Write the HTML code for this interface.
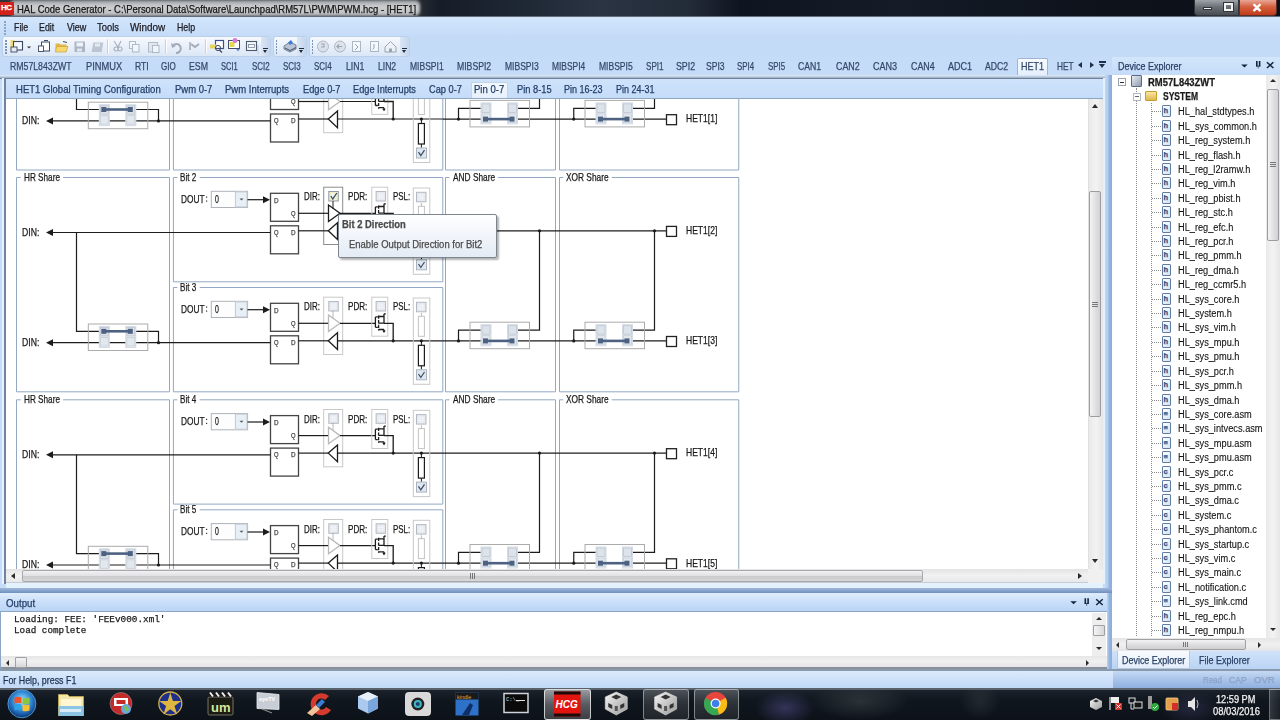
<!DOCTYPE html>
<html><head><meta charset="utf-8"><title>HAL Code Generator</title>
<style>
*{margin:0;padding:0;box-sizing:border-box}
html,body{width:1280px;height:720px;overflow:hidden;background:#c4dbf8;font-family:'Liberation Sans',sans-serif;}
.a{position:absolute;}
.t{position:absolute;white-space:pre;line-height:1;transform-origin:0 0;-webkit-text-stroke:0.25px currentColor;}
</style></head><body>

<div class="a" style="left:0;top:0;width:1280px;height:17px;background:linear-gradient(90deg,#2e333a 0px,#262b33 420px,#161d28 440px,#1e2734 520px,#2a3443 600px,#222b38 690px,#0f1520 740px,#151b27 900px,#0d121b 1100px,#0b101a 1280px);"></div>
<div class="a" style="left:10px;top:0px;width:410px;height:16px;background:linear-gradient(180deg,#9a9da1,#cdcfd1 40%,#b9bbbe);border-radius:5px;filter:blur(1.5px)"></div>
<div class="a" style="left:0;top:2px;width:14px;height:13px;background:#d4201a;"></div>
<div class="t" style="left:1px;top:4px;font-size:8px;font-weight:bold;color:#fff;letter-spacing:-0.5px">HC</div>
<div class="t" style="left:17.00px;top:4px;font-size:10.5px;color:#151515;font-weight:normal;font-family:'Liberation Sans';font-style:normal;transform:scaleX(0.902);">HAL Code Generator - C:\Personal Data\Software\Launchpad\RM57L\PWM\PWM.hcg - [HET1]</div>
<div class="a" style="left:1194px;top:0;width:45px;height:16px;background:linear-gradient(180deg,#a0a4a9,#6c7178 45%,#474c53);border:1px solid #30343a;border-top:none;border-radius:0 0 0 4px"></div>
<div class="a" style="left:1203px;top:7px;width:9px;height:3px;background:#f4f4f4;border:1px solid #333"></div>
<div class="a" style="left:1224px;top:3px;width:9px;height:8px;border:2px solid #f4f4f4;box-shadow:0 0 0 1px #333"></div>
<div class="a" style="left:1239px;top:0;width:38px;height:16px;background:linear-gradient(180deg,#e9a798,#d4603f 45%,#c13b1a);border:1px solid #5a3028;border-top:none;border-radius:0 0 4px 0"></div>
<div class="t" style="left:1252px;top:2px;font-size:12px;font-weight:bold;color:#fff;">&#x2715;</div>
<div class="a" style="left:0;top:16px;width:1280px;height:1px;background:#626b77"></div>
<div class="a" style="left:0;top:17px;width:1280px;height:20px;background:linear-gradient(180deg,#d2e5fb,#c4dbf8);"></div>
<div class="a" style="left:4px;top:21px;width:2px;height:2px;background:#8ea6c4"></div>
<div class="a" style="left:4px;top:24px;width:2px;height:2px;background:#8ea6c4"></div>
<div class="a" style="left:4px;top:27px;width:2px;height:2px;background:#8ea6c4"></div>
<div class="a" style="left:4px;top:30px;width:2px;height:2px;background:#8ea6c4"></div>
<div class="a" style="left:4px;top:33px;width:2px;height:2px;background:#8ea6c4"></div>
<div class="t" style="left:13.50px;top:23px;font-size:10.3px;color:#1c1c24;font-weight:normal;font-family:'Liberation Sans';font-style:normal;transform:scaleX(0.859);">File</div>
<div class="t" style="left:39.40px;top:23px;font-size:10.3px;color:#1c1c24;font-weight:normal;font-family:'Liberation Sans';font-style:normal;transform:scaleX(0.856);">Edit</div>
<div class="t" style="left:66.60px;top:23px;font-size:10.3px;color:#1c1c24;font-weight:normal;font-family:'Liberation Sans';font-style:normal;transform:scaleX(0.874);">View</div>
<div class="t" style="left:97.20px;top:23px;font-size:10.3px;color:#1c1c24;font-weight:normal;font-family:'Liberation Sans';font-style:normal;transform:scaleX(0.912);">Tools</div>
<div class="t" style="left:130.40px;top:23px;font-size:10.3px;color:#1c1c24;font-weight:normal;font-family:'Liberation Sans';font-style:normal;transform:scaleX(0.962);">Window</div>
<div class="t" style="left:176.70px;top:23px;font-size:10.3px;color:#1c1c24;font-weight:normal;font-family:'Liberation Sans';font-style:normal;transform:scaleX(0.855);">Help</div>
<div class="a" style="left:2px;top:36px;width:269px;height:21px;background:linear-gradient(180deg,#f6f9fe,#e9f0fa 50%,#dbe7f6);border:1px solid #bcd0e9;border-radius:3px"></div>
<div class="a" style="left:5px;top:40px;width:1.5px;height:1.5px;background:#7d95b5"></div>
<div class="a" style="left:5px;top:43px;width:1.5px;height:1.5px;background:#7d95b5"></div>
<div class="a" style="left:5px;top:46px;width:1.5px;height:1.5px;background:#7d95b5"></div>
<div class="a" style="left:5px;top:49px;width:1.5px;height:1.5px;background:#7d95b5"></div>
<div class="a" style="left:5px;top:52px;width:1.5px;height:1.5px;background:#7d95b5"></div>
<div class="a" style="left:261px;top:37px;width:9px;height:19px;background:linear-gradient(90deg,#dbe6f5,#c3d5ec);border-radius:0 2px 2px 0"></div>
<div class="a" style="left:263px;top:48px;width:5px;height:1px;background:#1e2a3a"></div>
<div class="a" style="left:263px;top:50px;width:0;height:0;border-left:2.5px solid transparent;border-right:2.5px solid transparent;border-top:3px solid #1e2a3a"></div>
<div class="a" style="left:272.5px;top:36px;width:34.5px;height:21px;background:linear-gradient(180deg,#f6f9fe,#e9f0fa 50%,#dbe7f6);border:1px solid #bcd0e9;border-radius:3px"></div>
<div class="a" style="left:275.5px;top:40px;width:1.5px;height:1.5px;background:#7d95b5"></div>
<div class="a" style="left:275.5px;top:43px;width:1.5px;height:1.5px;background:#7d95b5"></div>
<div class="a" style="left:275.5px;top:46px;width:1.5px;height:1.5px;background:#7d95b5"></div>
<div class="a" style="left:275.5px;top:49px;width:1.5px;height:1.5px;background:#7d95b5"></div>
<div class="a" style="left:275.5px;top:52px;width:1.5px;height:1.5px;background:#7d95b5"></div>
<div class="a" style="left:297px;top:37px;width:9px;height:19px;background:linear-gradient(90deg,#dbe6f5,#c3d5ec);border-radius:0 2px 2px 0"></div>
<div class="a" style="left:299px;top:48px;width:5px;height:1px;background:#1e2a3a"></div>
<div class="a" style="left:299px;top:50px;width:0;height:0;border-left:2.5px solid transparent;border-right:2.5px solid transparent;border-top:3px solid #1e2a3a"></div>
<div class="a" style="left:308.5px;top:36px;width:101.5px;height:21px;background:linear-gradient(180deg,#f6f9fe,#e9f0fa 50%,#dbe7f6);border:1px solid #bcd0e9;border-radius:3px"></div>
<div class="a" style="left:311.5px;top:40px;width:1.5px;height:1.5px;background:#7d95b5"></div>
<div class="a" style="left:311.5px;top:43px;width:1.5px;height:1.5px;background:#7d95b5"></div>
<div class="a" style="left:311.5px;top:46px;width:1.5px;height:1.5px;background:#7d95b5"></div>
<div class="a" style="left:311.5px;top:49px;width:1.5px;height:1.5px;background:#7d95b5"></div>
<div class="a" style="left:311.5px;top:52px;width:1.5px;height:1.5px;background:#7d95b5"></div>
<div class="a" style="left:400px;top:37px;width:9px;height:19px;background:linear-gradient(90deg,#dbe6f5,#c3d5ec);border-radius:0 2px 2px 0"></div>
<div class="a" style="left:402px;top:48px;width:5px;height:1px;background:#1e2a3a"></div>
<div class="a" style="left:402px;top:50px;width:0;height:0;border-left:2.5px solid transparent;border-right:2.5px solid transparent;border-top:3px solid #1e2a3a"></div>
<svg class="a" style="left:0;top:0" width="420" height="60" viewBox="0 0 420 60"><rect x="10.5" y="40" width="4" height="9" fill="#f2dc6a"/><rect x="13.5" y="41.5" width="9" height="8.5" fill="#f4f7fb" stroke="#3b4a63" stroke-width="1.1"/><rect x="11" y="47" width="6" height="5" fill="#e8ecf2" stroke="#3b4a63" stroke-width=".9"/><path d="M27,46.5h4l-2,2z" fill="#333"/><rect x="41.5" y="42" width="8" height="9" fill="#fff" stroke="#3b4a63" stroke-width="1"/><rect x="38.5" y="46" width="5" height="5.5" fill="#fff" stroke="#3b4a63" stroke-width=".9"/><path d="M44,40.5h4" stroke="#3b4a63" stroke-width="1"/><path d="M55.5,43.5h4l1,1h6v7h-11z" fill="#e2b84a"/><path d="M56.5,46.5h11.5l-2,5.5h-10.5z" fill="#f6d770" stroke="#c29a2e" stroke-width=".6"/><path d="M63,41.5l4,1" stroke="#3b4a63" stroke-width="1"/><rect x="74.5" y="41.5" width="10.5" height="10.5" fill="#9ba6b8" opacity=".8"/><rect x="76.5" y="42.5" width="6.5" height="4" fill="#eef2f7"/><rect x="77" y="48.5" width="5" height="3" fill="#dfe5ec"/><rect x="92.5" y="42.5" width="10" height="9.5" fill="#aab3c2" opacity=".7" transform="skewX(-10)" transform-origin="97 47"/><rect x="95" y="43.5" width="5" height="3" fill="#eef2f7" opacity=".8"/><g opacity=".45"><path d="M114,41l4,6l3,-6M116,47a2,2 0 1 0 .1,0M120,47a2,2 0 1 0 .1,0" stroke="#5d6878" stroke-width="1.2" fill="none"/><rect x="129.5" y="41.5" width="6" height="7" fill="#fff" stroke="#6d7888"/><rect x="132.5" y="44.5" width="6.5" height="7.5" fill="#fff" stroke="#6d7888"/><rect x="148.5" y="42.5" width="9" height="9.5" fill="#d8dde4" stroke="#6d7888"/><rect x="152.5" y="45.5" width="6.5" height="7" fill="#fff" stroke="#6d7888"/></g><g opacity=".45"><path d="M173,45.5a4.5,4.5 0 1 1 3,7.5" stroke="#4d5868" stroke-width="2" fill="none"/><path d="M171,43l1,5l4,-2z" fill="#4d5868"/><path d="M191,44l4,3l4,-3" stroke="#4d5868" stroke-width="2" fill="none"/><path d="M190,42v8" stroke="#4d5868" stroke-width="1.5"/></g><rect x="215.5" y="40.5" width="8" height="8" fill="#fff" stroke="#3d4f8a" stroke-width="1.2"/><path d="M210,44.5h6v4h-6z" fill="#e8d45a"/><circle cx="218" cy="48" r="2.6" fill="none" stroke="#3b4a63" stroke-width="1"/><path d="M219.5,50l2.5,2.5" stroke="#3b4a63" stroke-width="1.3"/><rect x="228.5" y="40.5" width="11" height="8" fill="#fff" stroke="#4a4d6a" stroke-width="1"/><rect x="229.5" y="42" width="5" height="5" fill="#e0dc50"/><path d="M235,43a2.5,2.5 0 1 1 .1,0z" fill="#d77ad6"/><path d="M236,49l2,2.5l2,-2.5z" fill="#6a8cc8"/><rect x="246.5" y="41.5" width="10" height="9" fill="#f6f8fb" stroke="#4d5a70" stroke-width="1.1"/><rect x="248.5" y="44.5" width="6" height="3" fill="none" stroke="#7a8598" stroke-width=".8"/><path d="M284,46l6,-4l6,3v4l-6,3l-6,-3z" fill="#b9c4d4" stroke="#5a6a80" stroke-width=".8"/><path d="M288,42.5l3,-2.5l2,3l-3,2z" fill="#3d7ad6"/><path d="M285,48l5,2.5l6,-3" stroke="#44526a" stroke-width="1" fill="none"/><g opacity=".55"><circle cx="323" cy="46.5" r="5.5" fill="#d3d8df" stroke="#7d8796" stroke-width="1"/><path d="M321,44h3v3h-3" stroke="#5d6878" stroke-width="1.1" fill="none"/><circle cx="340" cy="46.5" r="5.5" fill="#d3d8df" stroke="#7d8796" stroke-width="1"/><path d="M337,46.5h5M339,44.5l-2,2l2,2" stroke="#5d6878" stroke-width="1.1" fill="none"/><rect x="352.5" y="41.5" width="8" height="10" fill="#fff" stroke="#7d8796"/><path d="M355,44l3,3l-3,3" stroke="#5d6878" fill="none"/><rect x="370.5" y="41.5" width="8" height="10" fill="#fff" stroke="#7d8796"/><path d="M374,44v4l-1.5,1.5" stroke="#5d6878" fill="none"/><path d="M385,47l5.5,-5.5l5.5,5.5v5h-11z" fill="#f2f4f7" stroke="#5d6878" stroke-width="1"/><rect x="389" y="48.5" width="3" height="3.5" fill="#5d6878"/></g><path d="M258,45v9" stroke="#b7c9df" stroke-width="1"/><path d="M107.5,39.5v14" stroke="#c2d1e5" stroke-width="1"/><path d="M108.5,39.5v14" stroke="#fff" stroke-width="1"/><path d="M165.5,39.5v14" stroke="#c2d1e5" stroke-width="1"/><path d="M166.5,39.5v14" stroke="#fff" stroke-width="1"/><path d="M205.5,39.5v14" stroke="#c2d1e5" stroke-width="1"/><path d="M206.5,39.5v14" stroke="#fff" stroke-width="1"/></svg>
<div class="a" style="left:0;top:57px;width:1112px;height:18px;background:#c5dcf9;"></div>
<div class="a" style="left:1017px;top:58px;width:31px;height:18px;background:linear-gradient(180deg,#f7fbff,#e3eefb);border:1px solid #9fb5d2;border-bottom:none;border-radius:2px 2px 0 0"></div>
<div class="t" style="left:10.00px;top:62px;font-size:10.2px;color:#34496a;font-weight:normal;font-family:'Liberation Sans';font-style:normal;transform:scaleX(0.856);">RM57L843ZWT</div>
<div class="t" style="left:85.50px;top:62px;font-size:10.2px;color:#34496a;font-weight:normal;font-family:'Liberation Sans';font-style:normal;transform:scaleX(0.912);">PINMUX</div>
<div class="t" style="left:134.50px;top:62px;font-size:10.2px;color:#34496a;font-weight:normal;font-family:'Liberation Sans';font-style:normal;transform:scaleX(0.844);">RTI</div>
<div class="t" style="left:161.00px;top:62px;font-size:10.2px;color:#34496a;font-weight:normal;font-family:'Liberation Sans';font-style:normal;transform:scaleX(0.789);">GIO</div>
<div class="t" style="left:189.00px;top:62px;font-size:10.2px;color:#34496a;font-weight:normal;font-family:'Liberation Sans';font-style:normal;transform:scaleX(0.864);">ESM</div>
<div class="t" style="left:221.00px;top:62px;font-size:10.2px;color:#34496a;font-weight:normal;font-family:'Liberation Sans';font-style:normal;transform:scaleX(0.739);">SCI1</div>
<div class="t" style="left:252.00px;top:62px;font-size:10.2px;color:#34496a;font-weight:normal;font-family:'Liberation Sans';font-style:normal;transform:scaleX(0.783);">SCI2</div>
<div class="t" style="left:283.00px;top:62px;font-size:10.2px;color:#34496a;font-weight:normal;font-family:'Liberation Sans';font-style:normal;transform:scaleX(0.783);">SCI3</div>
<div class="t" style="left:314.00px;top:62px;font-size:10.2px;color:#34496a;font-weight:normal;font-family:'Liberation Sans';font-style:normal;transform:scaleX(0.783);">SCI4</div>
<div class="t" style="left:346.00px;top:62px;font-size:10.2px;color:#34496a;font-weight:normal;font-family:'Liberation Sans';font-style:normal;transform:scaleX(0.857);">LIN1</div>
<div class="t" style="left:377.50px;top:62px;font-size:10.2px;color:#34496a;font-weight:normal;font-family:'Liberation Sans';font-style:normal;transform:scaleX(0.841);">LIN2</div>
<div class="t" style="left:409.50px;top:62px;font-size:10.2px;color:#34496a;font-weight:normal;font-family:'Liberation Sans';font-style:normal;transform:scaleX(0.838);">MIBSPI1</div>
<div class="t" style="left:457.00px;top:62px;font-size:10.2px;color:#34496a;font-weight:normal;font-family:'Liberation Sans';font-style:normal;transform:scaleX(0.850);">MIBSPI2</div>
<div class="t" style="left:504.50px;top:62px;font-size:10.2px;color:#34496a;font-weight:normal;font-family:'Liberation Sans';font-style:normal;transform:scaleX(0.838);">MIBSPI3</div>
<div class="t" style="left:552.00px;top:62px;font-size:10.2px;color:#34496a;font-weight:normal;font-family:'Liberation Sans';font-style:normal;transform:scaleX(0.825);">MIBSPI4</div>
<div class="t" style="left:599.00px;top:62px;font-size:10.2px;color:#34496a;font-weight:normal;font-family:'Liberation Sans';font-style:normal;transform:scaleX(0.838);">MIBSPI5</div>
<div class="t" style="left:645.50px;top:62px;font-size:10.2px;color:#34496a;font-weight:normal;font-family:'Liberation Sans';font-style:normal;transform:scaleX(0.795);">SPI1</div>
<div class="t" style="left:676.00px;top:62px;font-size:10.2px;color:#34496a;font-weight:normal;font-family:'Liberation Sans';font-style:normal;transform:scaleX(0.864);">SPI2</div>
<div class="t" style="left:706.00px;top:62px;font-size:10.2px;color:#34496a;font-weight:normal;font-family:'Liberation Sans';font-style:normal;transform:scaleX(0.841);">SPI3</div>
<div class="t" style="left:737.00px;top:62px;font-size:10.2px;color:#34496a;font-weight:normal;font-family:'Liberation Sans';font-style:normal;transform:scaleX(0.773);">SPI4</div>
<div class="t" style="left:767.50px;top:62px;font-size:10.2px;color:#34496a;font-weight:normal;font-family:'Liberation Sans';font-style:normal;transform:scaleX(0.773);">SPI5</div>
<div class="t" style="left:798.00px;top:62px;font-size:10.2px;color:#34496a;font-weight:normal;font-family:'Liberation Sans';font-style:normal;transform:scaleX(0.852);">CAN1</div>
<div class="t" style="left:836.00px;top:62px;font-size:10.2px;color:#34496a;font-weight:normal;font-family:'Liberation Sans';font-style:normal;transform:scaleX(0.870);">CAN2</div>
<div class="t" style="left:873.00px;top:62px;font-size:10.2px;color:#34496a;font-weight:normal;font-family:'Liberation Sans';font-style:normal;transform:scaleX(0.889);">CAN3</div>
<div class="t" style="left:911.00px;top:62px;font-size:10.2px;color:#34496a;font-weight:normal;font-family:'Liberation Sans';font-style:normal;transform:scaleX(0.870);">CAN4</div>
<div class="t" style="left:948.00px;top:62px;font-size:10.2px;color:#34496a;font-weight:normal;font-family:'Liberation Sans';font-style:normal;transform:scaleX(0.889);">ADC1</div>
<div class="t" style="left:985.00px;top:62px;font-size:10.2px;color:#34496a;font-weight:normal;font-family:'Liberation Sans';font-style:normal;transform:scaleX(0.852);">ADC2</div>
<div class="t" style="left:1021.00px;top:62px;font-size:10.2px;color:#34496a;font-weight:normal;font-family:'Liberation Sans';font-style:normal;transform:scaleX(0.885);">HET1</div>
<div class="t" style="left:1057.00px;top:62px;font-size:10.2px;color:#34496a;font-weight:normal;font-family:'Liberation Sans';font-style:normal;transform:scaleX(0.810);">HET</div>
<div class="a" style="left:1078px;top:62px;width:0;height:0;border-top:3.5px solid transparent;border-bottom:3.5px solid transparent;border-right:4px solid #1e2f47"></div>
<div class="a" style="left:1090px;top:62px;width:0;height:0;border-top:3.5px solid transparent;border-bottom:3.5px solid transparent;border-left:4px solid #1e2f47"></div>
<div class="a" style="left:1099px;top:61px;width:7px;height:1.5px;background:#1e2f47"></div>
<div class="a" style="left:1099px;top:64px;width:0;height:0;border-left:3.5px solid transparent;border-right:3.5px solid transparent;border-top:4px solid #1e2f47"></div>
<div class="a" style="left:0;top:75px;width:1112px;height:3px;background:linear-gradient(180deg,#e6f0fb,#9aaec8)"></div>
<div class="a" style="left:0;top:78px;width:1112px;height:515px;background:#c6ddf9"></div>
<div class="a" style="left:0;top:78px;width:1112px;height:1px;background:#6e7f96"></div>
<div class="a" style="left:2px;top:78px;width:2px;height:506px;background:#eaf3fd"></div>
<div class="a" style="left:4px;top:78px;width:2px;height:506px;background:#6f84a0"></div>
<div class="a" style="left:1103px;top:78px;width:2px;height:506px;background:#e3f1fc"></div>
<div class="a" style="left:1105px;top:75px;width:7px;height:596px;background:linear-gradient(90deg,#c4d8f2 0,#b3cced 40%,#94b4e0 60%,#8aaddb)"></div>
<div class="a" style="left:6px;top:79px;width:1097px;height:20px;background:linear-gradient(180deg,#cfe3fb,#c4dbf8)"></div>
<div class="a" style="left:471px;top:81.5px;width:37px;height:17.5px;background:linear-gradient(180deg,#f3f8fe,#e6f0fc);border:1px solid #c3d3e8;border-bottom:none;border-radius:2px 2px 0 0"></div>
<div class="t" style="left:15.90px;top:85px;font-size:10.2px;color:#24406a;font-weight:normal;font-family:'Liberation Sans';font-style:normal;transform:scaleX(0.936);">HET1 Global Timing Configuration</div>
<div class="t" style="left:174.50px;top:85px;font-size:10.2px;color:#24406a;font-weight:normal;font-family:'Liberation Sans';font-style:normal;transform:scaleX(0.930);">Pwm 0-7</div>
<div class="t" style="left:225.00px;top:85px;font-size:10.2px;color:#24406a;font-weight:normal;font-family:'Liberation Sans';font-style:normal;transform:scaleX(0.935);">Pwm Interrupts</div>
<div class="t" style="left:302.80px;top:85px;font-size:10.2px;color:#24406a;font-weight:normal;font-family:'Liberation Sans';font-style:normal;transform:scaleX(0.907);">Edge 0-7</div>
<div class="t" style="left:352.70px;top:85px;font-size:10.2px;color:#24406a;font-weight:normal;font-family:'Liberation Sans';font-style:normal;transform:scaleX(0.904);">Edge Interrupts</div>
<div class="t" style="left:429.00px;top:85px;font-size:10.2px;color:#24406a;font-weight:normal;font-family:'Liberation Sans';font-style:normal;transform:scaleX(0.906);">Cap 0-7</div>
<div class="t" style="left:474.00px;top:85px;font-size:10.2px;color:#24406a;font-weight:normal;font-family:'Liberation Sans';font-style:normal;transform:scaleX(0.938);">Pin 0-7</div>
<div class="t" style="left:517.00px;top:85px;font-size:10.2px;color:#24406a;font-weight:normal;font-family:'Liberation Sans';font-style:normal;transform:scaleX(0.913);">Pin 8-15</div>
<div class="t" style="left:564.00px;top:85px;font-size:10.2px;color:#24406a;font-weight:normal;font-family:'Liberation Sans';font-style:normal;transform:scaleX(0.886);">Pin 16-23</div>
<div class="t" style="left:616.00px;top:85px;font-size:10.2px;color:#24406a;font-weight:normal;font-family:'Liberation Sans';font-style:normal;transform:scaleX(0.880);">Pin 24-31</div>
<div class="a" style="left:6px;top:98px;width:1097px;height:1px;background:#8fa5c2"></div>
<div class="a" style="left:6px;top:99px;width:1097px;height:470px;background:#fff;overflow:hidden">
<svg width="1097" height="470" viewBox="6 99 1097 470" style="position:absolute;left:0;top:0">
<path d="M20.75,-44.3H16.5V170.0H169.5V-44.3H63.0" fill="none" stroke="#93a8c4" stroke-width="1"/><path d="M449.5,-44.3H445.5V170.0H555.5V-44.3H498.0" fill="none" stroke="#93a8c4" stroke-width="1"/><path d="M563.25,-44.3H559.5V170.0H738.75V-44.3H611.75" fill="none" stroke="#93a8c4" stroke-width="1"/><path d="M177.3,-44.3H173.4V60.0H442.8V-44.3H199.70000000000002" fill="none" stroke="#93a8c4" stroke-width="1"/><rect x="206" y="-25.299999999999997" width="1.2" height="1.2" fill="#333"/><rect x="206" y="-21.299999999999997" width="1.2" height="1.2" fill="#333"/><rect x="211.3" y="-30.499999999999996" width="36.3" height="16.2" fill="#fdfdfe" stroke="#aeb3ba" stroke-width="1"/><rect x="235.4" y="-29.9" width="11.6" height="15" fill="#e9eff7" stroke="#c3cad3" stroke-width="1"/><path d="M239.5,-23.299999999999997h4l-2,2z" fill="#555"/><path d="M247.5,-22.099999999999998H263" fill="none" stroke="#1c1c1c" stroke-width="1.2"/><path d="M270,-22.099999999999998L263,-25.599999999999998V-18.599999999999998Z" fill="#1c1c1c"/><rect x="270.5" y="-28.499999999999996" width="28" height="28" fill="#fff" stroke="#444" stroke-width="1.3"/><rect x="270.5" y="4.0" width="28" height="28" fill="#fff" stroke="#444" stroke-width="1.3"/><rect x="323.7" y="-34.599999999999994" width="19" height="57.3" fill="none" stroke="#c9c9c9" stroke-width="1"/><rect x="328.8" y="-30.299999999999997" width="9.5" height="9.5" fill="#e6e9ee" stroke="#b3bac4" stroke-width="1"/><path d="M330.3,-26.799999999999997h6.5M330.3,-24.299999999999997h6.5M332.3,-28.799999999999997v6.5M334.8,-28.799999999999997v6.5" stroke="#f7f8fa" stroke-width=".7"/><path d="M298.5,-8.5H328" fill="none" stroke="#1c1c1c" stroke-width="1.2"/><g opacity="0.3"><path d="M328.5,-16.799999999999997L340,-8.5L328.5,-0.29999999999999716Z" fill="#fff" stroke="#1c1c1c" stroke-width="1.3"/><path d="M333,-20.799999999999997V-13.299999999999997" stroke="#1c1c1c" stroke-width="1"/></g><path d="M340,-8.5H375.4" fill="none" stroke="#1c1c1c" stroke-width="1.2"/><path d="M337.5,1.0L328.3,9.0L337.5,17.700000000000003Z" fill="#fff" stroke="#1c1c1c" stroke-width="1.3"/><path d="M298.5,9.0H328.3" fill="none" stroke="#1c1c1c" stroke-width="1.2"/><path d="M337.5,9.0H442.8" fill="none" stroke="#1c1c1c" stroke-width="1.2"/><rect x="371.8" y="-34.599999999999994" width="16" height="39" fill="none" stroke="#c9c9c9" stroke-width="1"/><rect x="376.1" y="-30.299999999999997" width="9.5" height="9.5" fill="#e6e9ee" stroke="#b3bac4" stroke-width="1"/><path d="M377.6,-26.799999999999997h6.5M377.6,-24.299999999999997h6.5M379.6,-28.799999999999997v6.5M382.1,-28.799999999999997v6.5" stroke="#f7f8fa" stroke-width=".7"/><path d="M375.4,-14.899999999999999V-4.5M377.8,-14.899999999999999H375.4M375.4,-4.5H377.8M378.5,-15.299999999999997H384M378.5,-8.699999999999996H384M378.5,-2.299999999999997H384M384,-17.999999999999996V-8.699999999999996M384,-17.999999999999996H385.8M384,-2.299999999999997V-0.29999999999999716M384,-8.5H393.2V9.0" fill="none" stroke="#1c1c1c" stroke-width="1.3"/><path d="M378.6,-16.299999999999997V-1.2999999999999972" fill="none" stroke="#1c1c1c" stroke-width="1.3" stroke-dasharray="3.2,1.4"/><path d="M382.3,-1.2999999999999972h3.4l-1.7,2.6z" fill="#1c1c1c"/><circle cx="393.2" cy="9.0" r="1.6" fill="#1c1c1c"/><rect x="413.3" y="-33.8" width="16.5" height="86.3" fill="none" stroke="#c9c9c9" stroke-width="1"/><rect x="416.5" y="-29.499999999999996" width="9.5" height="9.5" fill="#e6e9ee" stroke="#b3bac4" stroke-width="1"/><path d="M418,-25.999999999999996h6.5M418,-23.499999999999996h6.5M420,-27.999999999999996v6.5M422.5,-27.999999999999996v6.5" stroke="#f7f8fa" stroke-width=".7"/><rect x="418.4" y="-15.499999999999996" width="6" height="20" fill="#fff" stroke="#c4c4c4" stroke-width="1"/><path d="M421.4,-18.799999999999997V-15.499999999999996" stroke="#bbb" stroke-width="1"/><path d="M421.4,9.0V13.5" stroke="#1c1c1c" stroke-width="1"/><circle cx="421.4" cy="9.0" r="1.6" fill="#1c1c1c"/><rect x="418.4" y="13.5" width="6" height="20.5" fill="#fff" stroke="#1c1c1c" stroke-width="1.2"/><path d="M421.4,34.0V37.7" stroke="#1c1c1c" stroke-width="1"/><rect x="416.5" y="38.0" width="10" height="10" fill="#dfe6ef" stroke="#aab4c1" stroke-width="1"/><path d="M418.5,42.2L420.8,45.7L424.5,40.2" fill="none" stroke="#3b4a5e" stroke-width="1.2"/><path d="M177.3,65.7H173.4V170.0H442.8V65.7H199.70000000000002" fill="none" stroke="#93a8c4" stroke-width="1"/><rect x="206" y="84.7" width="1.2" height="1.2" fill="#333"/><rect x="206" y="88.7" width="1.2" height="1.2" fill="#333"/><rect x="211.3" y="79.5" width="36.3" height="16.2" fill="#fdfdfe" stroke="#aeb3ba" stroke-width="1"/><rect x="235.4" y="80.10000000000001" width="11.6" height="15" fill="#e9eff7" stroke="#c3cad3" stroke-width="1"/><path d="M239.5,86.7h4l-2,2z" fill="#555"/><path d="M247.5,87.9H263" fill="none" stroke="#1c1c1c" stroke-width="1.2"/><path d="M270,87.9L263,84.4V91.4Z" fill="#1c1c1c"/><rect x="270.5" y="81.5" width="28" height="28" fill="#fff" stroke="#444" stroke-width="1.3"/><rect x="270.5" y="114.0" width="28" height="28" fill="#fff" stroke="#444" stroke-width="1.3"/><rect x="323.7" y="75.4" width="19" height="57.3" fill="none" stroke="#c9c9c9" stroke-width="1"/><rect x="328.8" y="79.7" width="9.5" height="9.5" fill="#e6e9ee" stroke="#b3bac4" stroke-width="1"/><path d="M330.3,83.2h6.5M330.3,85.7h6.5M332.3,81.2v6.5M334.8,81.2v6.5" stroke="#f7f8fa" stroke-width=".7"/><path d="M298.5,101.5H328" fill="none" stroke="#1c1c1c" stroke-width="1.2"/><g opacity="0.3"><path d="M328.5,93.2L340,101.5L328.5,109.7Z" fill="#fff" stroke="#1c1c1c" stroke-width="1.3"/><path d="M333,89.2V96.7" stroke="#1c1c1c" stroke-width="1"/></g><path d="M340,101.5H375.4" fill="none" stroke="#1c1c1c" stroke-width="1.2"/><path d="M337.5,111.0L328.3,119.0L337.5,127.7Z" fill="#fff" stroke="#1c1c1c" stroke-width="1.3"/><path d="M298.5,119.0H328.3" fill="none" stroke="#1c1c1c" stroke-width="1.2"/><path d="M337.5,119.0H442.8" fill="none" stroke="#1c1c1c" stroke-width="1.2"/><rect x="371.8" y="75.4" width="16" height="39" fill="none" stroke="#c9c9c9" stroke-width="1"/><rect x="376.1" y="79.7" width="9.5" height="9.5" fill="#e6e9ee" stroke="#b3bac4" stroke-width="1"/><path d="M377.6,83.2h6.5M377.6,85.7h6.5M379.6,81.2v6.5M382.1,81.2v6.5" stroke="#f7f8fa" stroke-width=".7"/><path d="M375.4,95.1V105.5M377.8,95.1H375.4M375.4,105.5H377.8M378.5,94.7H384M378.5,101.30000000000001H384M378.5,107.7H384M384,92.0V101.30000000000001M384,92.0H385.8M384,107.7V109.7M384,101.5H393.2V119.0" fill="none" stroke="#1c1c1c" stroke-width="1.3"/><path d="M378.6,93.7V108.7" fill="none" stroke="#1c1c1c" stroke-width="1.3" stroke-dasharray="3.2,1.4"/><path d="M382.3,108.7h3.4l-1.7,2.6z" fill="#1c1c1c"/><circle cx="393.2" cy="119.0" r="1.6" fill="#1c1c1c"/><rect x="413.3" y="76.2" width="16.5" height="86.3" fill="none" stroke="#c9c9c9" stroke-width="1"/><rect x="416.5" y="80.5" width="9.5" height="9.5" fill="#e6e9ee" stroke="#b3bac4" stroke-width="1"/><path d="M418,84.0h6.5M418,86.5h6.5M420,82.0v6.5M422.5,82.0v6.5" stroke="#f7f8fa" stroke-width=".7"/><rect x="418.4" y="94.5" width="6" height="20" fill="#fff" stroke="#c4c4c4" stroke-width="1"/><path d="M421.4,91.2V94.5" stroke="#bbb" stroke-width="1"/><path d="M421.4,119.0V123.5" stroke="#1c1c1c" stroke-width="1"/><circle cx="421.4" cy="119.0" r="1.6" fill="#1c1c1c"/><rect x="418.4" y="123.5" width="6" height="20.5" fill="#fff" stroke="#1c1c1c" stroke-width="1.2"/><path d="M421.4,144.0V147.7" stroke="#1c1c1c" stroke-width="1"/><rect x="416.5" y="148.0" width="10" height="10" fill="#dfe6ef" stroke="#aab4c1" stroke-width="1"/><path d="M418.5,152.2L420.8,155.7L424.5,150.2" fill="none" stroke="#3b4a5e" stroke-width="1.2"/><path d="M46,10.700000000000003L53,7.200000000000003V14.200000000000003Z" fill="#1c1c1c"/><path d="M52,10.700000000000003H270.5" fill="none" stroke="#1c1c1c" stroke-width="1.2"/><path d="M76.5,10.700000000000003V109.5H99" fill="none" stroke="#1c1c1c" stroke-width="1.2"/><path d="M46,120.9L53,117.4V124.4Z" fill="#1c1c1c"/><path d="M52,120.9H270.5" fill="none" stroke="#1c1c1c" stroke-width="1.2"/><path d="M136,109.5H158.5V120.9" fill="none" stroke="#1c1c1c" stroke-width="1.2"/><circle cx="158.5" cy="120.9" r="1.6" fill="#1c1c1c"/><rect x="88.3" y="102.2" width="59.5" height="26.5" fill="none" stroke="#ababab" stroke-width="1"/><rect x="99.3" y="104.7" width="10" height="21" fill="#edf2f9" stroke="#d3dbe6" stroke-width="1"/><rect x="100.3" y="105.7" width="8" height="8.5" fill="#dde3ea" stroke="#bcc4ce" stroke-width=".8"/><rect x="100.3" y="115.7" width="8" height="8.5" fill="#e3e8ee" stroke="#c4ccd6" stroke-width=".8"/><rect x="125.8" y="104.7" width="10" height="21" fill="#edf2f9" stroke="#d3dbe6" stroke-width="1"/><rect x="126.8" y="105.7" width="8" height="8.5" fill="#dde3ea" stroke="#bcc4ce" stroke-width=".8"/><rect x="126.8" y="115.7" width="8" height="8.5" fill="#e3e8ee" stroke="#c4ccd6" stroke-width=".8"/><path d="M103.3,109.5H130.8" stroke="#4d6282" stroke-width="2.6"/><rect x="101.3" y="107.0" width="5" height="5" fill="#4d6282"/><rect x="127.8" y="107.0" width="5" height="5" fill="#4d6282"/><path d="M442.8,9.0H666.5" fill="none" stroke="#1c1c1c" stroke-width="1.2"/><circle cx="539.5" cy="9.0" r="1.6" fill="#1c1c1c"/><circle cx="654.5" cy="9.0" r="1.6" fill="#1c1c1c"/><path d="M539.5,9.0V108.30000000000001H517.5" fill="none" stroke="#1c1c1c" stroke-width="1.2"/><path d="M654.5,9.0V108.30000000000001H632.5" fill="none" stroke="#1c1c1c" stroke-width="1.2"/><rect x="666.5" y="4.6" width="10" height="10" fill="#fff" stroke="#222" stroke-width="1.3"/><path d="M442.8,119.1H666.5" fill="none" stroke="#1c1c1c" stroke-width="1.2"/><circle cx="458.5" cy="119.1" r="1.6" fill="#1c1c1c"/><circle cx="573.75" cy="119.1" r="1.6" fill="#1c1c1c"/><path d="M458.5,119.1V108.30000000000001H481" fill="none" stroke="#1c1c1c" stroke-width="1.2"/><path d="M573.75,119.1V108.30000000000001H596" fill="none" stroke="#1c1c1c" stroke-width="1.2"/><rect x="470" y="100.4" width="59.5" height="26.5" fill="none" stroke="#ababab" stroke-width="1"/><rect x="481" y="102.9" width="10" height="21" fill="#edf2f9" stroke="#d3dbe6" stroke-width="1"/><rect x="482" y="103.9" width="8" height="8.5" fill="#dde3ea" stroke="#bcc4ce" stroke-width=".8"/><rect x="482" y="113.9" width="8" height="8.5" fill="#e3e8ee" stroke="#c4ccd6" stroke-width=".8"/><rect x="507.5" y="102.9" width="10" height="21" fill="#edf2f9" stroke="#d3dbe6" stroke-width="1"/><rect x="508.5" y="103.9" width="8" height="8.5" fill="#dde3ea" stroke="#bcc4ce" stroke-width=".8"/><rect x="508.5" y="113.9" width="8" height="8.5" fill="#e3e8ee" stroke="#c4ccd6" stroke-width=".8"/><path d="M485,119.10000000000001H512.5" stroke="#4d6282" stroke-width="2.6"/><rect x="483" y="116.60000000000001" width="5" height="5" fill="#4d6282"/><rect x="509.5" y="116.60000000000001" width="5" height="5" fill="#4d6282"/><rect x="585" y="100.4" width="59.5" height="26.5" fill="none" stroke="#ababab" stroke-width="1"/><rect x="596" y="102.9" width="10" height="21" fill="#edf2f9" stroke="#d3dbe6" stroke-width="1"/><rect x="597" y="103.9" width="8" height="8.5" fill="#dde3ea" stroke="#bcc4ce" stroke-width=".8"/><rect x="597" y="113.9" width="8" height="8.5" fill="#e3e8ee" stroke="#c4ccd6" stroke-width=".8"/><rect x="622.5" y="102.9" width="10" height="21" fill="#edf2f9" stroke="#d3dbe6" stroke-width="1"/><rect x="623.5" y="103.9" width="8" height="8.5" fill="#dde3ea" stroke="#bcc4ce" stroke-width=".8"/><rect x="623.5" y="113.9" width="8" height="8.5" fill="#e3e8ee" stroke="#c4ccd6" stroke-width=".8"/><path d="M600,119.10000000000001H627.5" stroke="#4d6282" stroke-width="2.6"/><rect x="598" y="116.60000000000001" width="5" height="5" fill="#4d6282"/><rect x="624.5" y="116.60000000000001" width="5" height="5" fill="#4d6282"/><rect x="666.5" y="114.69999999999999" width="10" height="10" fill="#fff" stroke="#222" stroke-width="1.3"/><path d="M20.75,177.5H16.5V391.8H169.5V177.5H63.0" fill="none" stroke="#93a8c4" stroke-width="1"/><path d="M449.5,177.5H445.5V391.8H555.5V177.5H498.0" fill="none" stroke="#93a8c4" stroke-width="1"/><path d="M563.25,177.5H559.5V391.8H738.75V177.5H611.75" fill="none" stroke="#93a8c4" stroke-width="1"/><path d="M177.3,177.5H173.4V281.8H442.8V177.5H199.70000000000002" fill="none" stroke="#93a8c4" stroke-width="1"/><rect x="206" y="196.5" width="1.2" height="1.2" fill="#333"/><rect x="206" y="200.5" width="1.2" height="1.2" fill="#333"/><rect x="211.3" y="191.3" width="36.3" height="16.2" fill="#fdfdfe" stroke="#aeb3ba" stroke-width="1"/><rect x="235.4" y="191.9" width="11.6" height="15" fill="#e9eff7" stroke="#c3cad3" stroke-width="1"/><path d="M239.5,198.5h4l-2,2z" fill="#555"/><path d="M247.5,199.7H263" fill="none" stroke="#1c1c1c" stroke-width="1.2"/><path d="M270,199.7L263,196.2V203.2Z" fill="#1c1c1c"/><rect x="270.5" y="193.3" width="28" height="28" fill="#fff" stroke="#444" stroke-width="1.3"/><rect x="270.5" y="225.8" width="28" height="28" fill="#fff" stroke="#444" stroke-width="1.3"/><rect x="323.7" y="187.2" width="19" height="57.3" fill="none" stroke="#8d8d8d" stroke-width="1"/><rect x="328.8" y="191.5" width="9.5" height="9.5" fill="#f1efc9" stroke="#8f9aa8" stroke-width="1"/><path d="M330.3,195.0h6.5M330.3,197.5h6.5M332.3,193.0v6.5M334.8,193.0v6.5" stroke="#f7f8fa" stroke-width=".7"/><path d="M330.8,196.0L332.8,199.0L336.8,193.0" fill="none" stroke="#3b4a5e" stroke-width="1.3"/><path d="M298.5,213.3H328" fill="none" stroke="#1c1c1c" stroke-width="1.2"/><g opacity="1"><path d="M328.5,205.0L340,213.3L328.5,221.5Z" fill="#fff" stroke="#1c1c1c" stroke-width="1.3"/><path d="M333,201.0V208.5" stroke="#1c1c1c" stroke-width="1"/></g><path d="M340,213.3H375.4" fill="none" stroke="#1c1c1c" stroke-width="1.2"/><path d="M337.5,222.8L328.3,230.8L337.5,239.5Z" fill="#fff" stroke="#1c1c1c" stroke-width="1.3"/><path d="M298.5,230.8H328.3" fill="none" stroke="#1c1c1c" stroke-width="1.2"/><path d="M337.5,230.8H442.8" fill="none" stroke="#1c1c1c" stroke-width="1.2"/><rect x="371.8" y="187.2" width="16" height="39" fill="none" stroke="#c9c9c9" stroke-width="1"/><rect x="376.1" y="191.5" width="9.5" height="9.5" fill="#e6e9ee" stroke="#b3bac4" stroke-width="1"/><path d="M377.6,195.0h6.5M377.6,197.5h6.5M379.6,193.0v6.5M382.1,193.0v6.5" stroke="#f7f8fa" stroke-width=".7"/><path d="M375.4,206.9V217.3M377.8,206.9H375.4M375.4,217.3H377.8M378.5,206.5H384M378.5,213.1H384M378.5,219.5H384M384,203.8V213.1M384,203.8H385.8M384,219.5V221.5M384,213.3H393.2V230.8" fill="none" stroke="#1c1c1c" stroke-width="1.3"/><path d="M378.6,205.5V220.5" fill="none" stroke="#1c1c1c" stroke-width="1.3" stroke-dasharray="3.2,1.4"/><path d="M382.3,220.5h3.4l-1.7,2.6z" fill="#1c1c1c"/><circle cx="393.2" cy="230.8" r="1.6" fill="#1c1c1c"/><rect x="413.3" y="188.0" width="16.5" height="86.3" fill="none" stroke="#c9c9c9" stroke-width="1"/><rect x="416.5" y="192.3" width="9.5" height="9.5" fill="#e6e9ee" stroke="#b3bac4" stroke-width="1"/><path d="M418,195.8h6.5M418,198.3h6.5M420,193.8v6.5M422.5,193.8v6.5" stroke="#f7f8fa" stroke-width=".7"/><rect x="418.4" y="206.3" width="6" height="20" fill="#fff" stroke="#c4c4c4" stroke-width="1"/><path d="M421.4,203.0V206.3" stroke="#bbb" stroke-width="1"/><path d="M421.4,230.8V235.3" stroke="#1c1c1c" stroke-width="1"/><circle cx="421.4" cy="230.8" r="1.6" fill="#1c1c1c"/><rect x="418.4" y="235.3" width="6" height="20.5" fill="#fff" stroke="#1c1c1c" stroke-width="1.2"/><path d="M421.4,255.8V259.5" stroke="#1c1c1c" stroke-width="1"/><rect x="416.5" y="259.8" width="10" height="10" fill="#dfe6ef" stroke="#aab4c1" stroke-width="1"/><path d="M418.5,264.0L420.8,267.5L424.5,262.0" fill="none" stroke="#3b4a5e" stroke-width="1.2"/><path d="M177.3,287.5H173.4V391.8H442.8V287.5H199.70000000000002" fill="none" stroke="#93a8c4" stroke-width="1"/><rect x="206" y="306.5" width="1.2" height="1.2" fill="#333"/><rect x="206" y="310.5" width="1.2" height="1.2" fill="#333"/><rect x="211.3" y="301.3" width="36.3" height="16.2" fill="#fdfdfe" stroke="#aeb3ba" stroke-width="1"/><rect x="235.4" y="301.9" width="11.6" height="15" fill="#e9eff7" stroke="#c3cad3" stroke-width="1"/><path d="M239.5,308.5h4l-2,2z" fill="#555"/><path d="M247.5,309.7H263" fill="none" stroke="#1c1c1c" stroke-width="1.2"/><path d="M270,309.7L263,306.2V313.2Z" fill="#1c1c1c"/><rect x="270.5" y="303.3" width="28" height="28" fill="#fff" stroke="#444" stroke-width="1.3"/><rect x="270.5" y="335.8" width="28" height="28" fill="#fff" stroke="#444" stroke-width="1.3"/><rect x="323.7" y="297.2" width="19" height="57.3" fill="none" stroke="#c9c9c9" stroke-width="1"/><rect x="328.8" y="301.5" width="9.5" height="9.5" fill="#e6e9ee" stroke="#b3bac4" stroke-width="1"/><path d="M330.3,305.0h6.5M330.3,307.5h6.5M332.3,303.0v6.5M334.8,303.0v6.5" stroke="#f7f8fa" stroke-width=".7"/><path d="M298.5,323.3H328" fill="none" stroke="#1c1c1c" stroke-width="1.2"/><g opacity="0.3"><path d="M328.5,315.0L340,323.3L328.5,331.5Z" fill="#fff" stroke="#1c1c1c" stroke-width="1.3"/><path d="M333,311.0V318.5" stroke="#1c1c1c" stroke-width="1"/></g><path d="M340,323.3H375.4" fill="none" stroke="#1c1c1c" stroke-width="1.2"/><path d="M337.5,332.8L328.3,340.8L337.5,349.5Z" fill="#fff" stroke="#1c1c1c" stroke-width="1.3"/><path d="M298.5,340.8H328.3" fill="none" stroke="#1c1c1c" stroke-width="1.2"/><path d="M337.5,340.8H442.8" fill="none" stroke="#1c1c1c" stroke-width="1.2"/><rect x="371.8" y="297.2" width="16" height="39" fill="none" stroke="#c9c9c9" stroke-width="1"/><rect x="376.1" y="301.5" width="9.5" height="9.5" fill="#e6e9ee" stroke="#b3bac4" stroke-width="1"/><path d="M377.6,305.0h6.5M377.6,307.5h6.5M379.6,303.0v6.5M382.1,303.0v6.5" stroke="#f7f8fa" stroke-width=".7"/><path d="M375.4,316.9V327.3M377.8,316.9H375.4M375.4,327.3H377.8M378.5,316.5H384M378.5,323.1H384M378.5,329.5H384M384,313.8V323.1M384,313.8H385.8M384,329.5V331.5M384,323.3H393.2V340.8" fill="none" stroke="#1c1c1c" stroke-width="1.3"/><path d="M378.6,315.5V330.5" fill="none" stroke="#1c1c1c" stroke-width="1.3" stroke-dasharray="3.2,1.4"/><path d="M382.3,330.5h3.4l-1.7,2.6z" fill="#1c1c1c"/><circle cx="393.2" cy="340.8" r="1.6" fill="#1c1c1c"/><rect x="413.3" y="298.0" width="16.5" height="86.3" fill="none" stroke="#c9c9c9" stroke-width="1"/><rect x="416.5" y="302.3" width="9.5" height="9.5" fill="#e6e9ee" stroke="#b3bac4" stroke-width="1"/><path d="M418,305.8h6.5M418,308.3h6.5M420,303.8v6.5M422.5,303.8v6.5" stroke="#f7f8fa" stroke-width=".7"/><rect x="418.4" y="316.3" width="6" height="20" fill="#fff" stroke="#c4c4c4" stroke-width="1"/><path d="M421.4,313.0V316.3" stroke="#bbb" stroke-width="1"/><path d="M421.4,340.8V345.3" stroke="#1c1c1c" stroke-width="1"/><circle cx="421.4" cy="340.8" r="1.6" fill="#1c1c1c"/><rect x="418.4" y="345.3" width="6" height="20.5" fill="#fff" stroke="#1c1c1c" stroke-width="1.2"/><path d="M421.4,365.8V369.5" stroke="#1c1c1c" stroke-width="1"/><rect x="416.5" y="369.8" width="10" height="10" fill="#dfe6ef" stroke="#aab4c1" stroke-width="1"/><path d="M418.5,374.0L420.8,377.5L424.5,372.0" fill="none" stroke="#3b4a5e" stroke-width="1.2"/><path d="M46,232.5L53,229.0V236.0Z" fill="#1c1c1c"/><path d="M52,232.5H270.5" fill="none" stroke="#1c1c1c" stroke-width="1.2"/><path d="M76.5,232.5V331.3H99" fill="none" stroke="#1c1c1c" stroke-width="1.2"/><path d="M46,342.7L53,339.2V346.2Z" fill="#1c1c1c"/><path d="M52,342.7H270.5" fill="none" stroke="#1c1c1c" stroke-width="1.2"/><path d="M136,331.3H158.5V342.7" fill="none" stroke="#1c1c1c" stroke-width="1.2"/><circle cx="158.5" cy="342.7" r="1.6" fill="#1c1c1c"/><rect x="88.3" y="324.0" width="59.5" height="26.5" fill="none" stroke="#ababab" stroke-width="1"/><rect x="99.3" y="326.5" width="10" height="21" fill="#edf2f9" stroke="#d3dbe6" stroke-width="1"/><rect x="100.3" y="327.5" width="8" height="8.5" fill="#dde3ea" stroke="#bcc4ce" stroke-width=".8"/><rect x="100.3" y="337.5" width="8" height="8.5" fill="#e3e8ee" stroke="#c4ccd6" stroke-width=".8"/><rect x="125.8" y="326.5" width="10" height="21" fill="#edf2f9" stroke="#d3dbe6" stroke-width="1"/><rect x="126.8" y="327.5" width="8" height="8.5" fill="#dde3ea" stroke="#bcc4ce" stroke-width=".8"/><rect x="126.8" y="337.5" width="8" height="8.5" fill="#e3e8ee" stroke="#c4ccd6" stroke-width=".8"/><path d="M103.3,331.3H130.8" stroke="#4d6282" stroke-width="2.6"/><rect x="101.3" y="328.8" width="5" height="5" fill="#4d6282"/><rect x="127.8" y="328.8" width="5" height="5" fill="#4d6282"/><path d="M442.8,230.8H666.5" fill="none" stroke="#1c1c1c" stroke-width="1.2"/><circle cx="539.5" cy="230.8" r="1.6" fill="#1c1c1c"/><circle cx="654.5" cy="230.8" r="1.6" fill="#1c1c1c"/><path d="M539.5,230.8V330.1H517.5" fill="none" stroke="#1c1c1c" stroke-width="1.2"/><path d="M654.5,230.8V330.1H632.5" fill="none" stroke="#1c1c1c" stroke-width="1.2"/><rect x="666.5" y="226.4" width="10" height="10" fill="#fff" stroke="#222" stroke-width="1.3"/><path d="M442.8,340.9H666.5" fill="none" stroke="#1c1c1c" stroke-width="1.2"/><circle cx="458.5" cy="340.9" r="1.6" fill="#1c1c1c"/><circle cx="573.75" cy="340.9" r="1.6" fill="#1c1c1c"/><path d="M458.5,340.9V330.1H481" fill="none" stroke="#1c1c1c" stroke-width="1.2"/><path d="M573.75,340.9V330.1H596" fill="none" stroke="#1c1c1c" stroke-width="1.2"/><rect x="470" y="322.2" width="59.5" height="26.5" fill="none" stroke="#ababab" stroke-width="1"/><rect x="481" y="324.7" width="10" height="21" fill="#edf2f9" stroke="#d3dbe6" stroke-width="1"/><rect x="482" y="325.7" width="8" height="8.5" fill="#dde3ea" stroke="#bcc4ce" stroke-width=".8"/><rect x="482" y="335.7" width="8" height="8.5" fill="#e3e8ee" stroke="#c4ccd6" stroke-width=".8"/><rect x="507.5" y="324.7" width="10" height="21" fill="#edf2f9" stroke="#d3dbe6" stroke-width="1"/><rect x="508.5" y="325.7" width="8" height="8.5" fill="#dde3ea" stroke="#bcc4ce" stroke-width=".8"/><rect x="508.5" y="335.7" width="8" height="8.5" fill="#e3e8ee" stroke="#c4ccd6" stroke-width=".8"/><path d="M485,340.9H512.5" stroke="#4d6282" stroke-width="2.6"/><rect x="483" y="338.4" width="5" height="5" fill="#4d6282"/><rect x="509.5" y="338.4" width="5" height="5" fill="#4d6282"/><rect x="585" y="322.2" width="59.5" height="26.5" fill="none" stroke="#ababab" stroke-width="1"/><rect x="596" y="324.7" width="10" height="21" fill="#edf2f9" stroke="#d3dbe6" stroke-width="1"/><rect x="597" y="325.7" width="8" height="8.5" fill="#dde3ea" stroke="#bcc4ce" stroke-width=".8"/><rect x="597" y="335.7" width="8" height="8.5" fill="#e3e8ee" stroke="#c4ccd6" stroke-width=".8"/><rect x="622.5" y="324.7" width="10" height="21" fill="#edf2f9" stroke="#d3dbe6" stroke-width="1"/><rect x="623.5" y="325.7" width="8" height="8.5" fill="#dde3ea" stroke="#bcc4ce" stroke-width=".8"/><rect x="623.5" y="335.7" width="8" height="8.5" fill="#e3e8ee" stroke="#c4ccd6" stroke-width=".8"/><path d="M600,340.9H627.5" stroke="#4d6282" stroke-width="2.6"/><rect x="598" y="338.4" width="5" height="5" fill="#4d6282"/><rect x="624.5" y="338.4" width="5" height="5" fill="#4d6282"/><rect x="666.5" y="336.5" width="10" height="10" fill="#fff" stroke="#222" stroke-width="1.3"/><path d="M20.75,399.8H16.5V614.1H169.5V399.8H63.0" fill="none" stroke="#93a8c4" stroke-width="1"/><path d="M449.5,399.8H445.5V614.1H555.5V399.8H498.0" fill="none" stroke="#93a8c4" stroke-width="1"/><path d="M563.25,399.8H559.5V614.1H738.75V399.8H611.75" fill="none" stroke="#93a8c4" stroke-width="1"/><path d="M177.3,399.8H173.4V504.1H442.8V399.8H199.70000000000002" fill="none" stroke="#93a8c4" stroke-width="1"/><rect x="206" y="418.8" width="1.2" height="1.2" fill="#333"/><rect x="206" y="422.8" width="1.2" height="1.2" fill="#333"/><rect x="211.3" y="413.6" width="36.3" height="16.2" fill="#fdfdfe" stroke="#aeb3ba" stroke-width="1"/><rect x="235.4" y="414.2" width="11.6" height="15" fill="#e9eff7" stroke="#c3cad3" stroke-width="1"/><path d="M239.5,420.8h4l-2,2z" fill="#555"/><path d="M247.5,422.0H263" fill="none" stroke="#1c1c1c" stroke-width="1.2"/><path d="M270,422.0L263,418.5V425.5Z" fill="#1c1c1c"/><rect x="270.5" y="415.6" width="28" height="28" fill="#fff" stroke="#444" stroke-width="1.3"/><rect x="270.5" y="448.1" width="28" height="28" fill="#fff" stroke="#444" stroke-width="1.3"/><rect x="323.7" y="409.5" width="19" height="57.3" fill="none" stroke="#c9c9c9" stroke-width="1"/><rect x="328.8" y="413.8" width="9.5" height="9.5" fill="#e6e9ee" stroke="#b3bac4" stroke-width="1"/><path d="M330.3,417.3h6.5M330.3,419.8h6.5M332.3,415.3v6.5M334.8,415.3v6.5" stroke="#f7f8fa" stroke-width=".7"/><path d="M298.5,435.6H328" fill="none" stroke="#1c1c1c" stroke-width="1.2"/><g opacity="0.3"><path d="M328.5,427.3L340,435.6L328.5,443.8Z" fill="#fff" stroke="#1c1c1c" stroke-width="1.3"/><path d="M333,423.3V430.8" stroke="#1c1c1c" stroke-width="1"/></g><path d="M340,435.6H375.4" fill="none" stroke="#1c1c1c" stroke-width="1.2"/><path d="M337.5,445.1L328.3,453.1L337.5,461.8Z" fill="#fff" stroke="#1c1c1c" stroke-width="1.3"/><path d="M298.5,453.1H328.3" fill="none" stroke="#1c1c1c" stroke-width="1.2"/><path d="M337.5,453.1H442.8" fill="none" stroke="#1c1c1c" stroke-width="1.2"/><rect x="371.8" y="409.5" width="16" height="39" fill="none" stroke="#c9c9c9" stroke-width="1"/><rect x="376.1" y="413.8" width="9.5" height="9.5" fill="#e6e9ee" stroke="#b3bac4" stroke-width="1"/><path d="M377.6,417.3h6.5M377.6,419.8h6.5M379.6,415.3v6.5M382.1,415.3v6.5" stroke="#f7f8fa" stroke-width=".7"/><path d="M375.4,429.2V439.6M377.8,429.2H375.4M375.4,439.6H377.8M378.5,428.8H384M378.5,435.40000000000003H384M378.5,441.8H384M384,426.1V435.40000000000003M384,426.1H385.8M384,441.8V443.8M384,435.6H393.2V453.1" fill="none" stroke="#1c1c1c" stroke-width="1.3"/><path d="M378.6,427.8V442.8" fill="none" stroke="#1c1c1c" stroke-width="1.3" stroke-dasharray="3.2,1.4"/><path d="M382.3,442.8h3.4l-1.7,2.6z" fill="#1c1c1c"/><circle cx="393.2" cy="453.1" r="1.6" fill="#1c1c1c"/><rect x="413.3" y="410.3" width="16.5" height="86.3" fill="none" stroke="#c9c9c9" stroke-width="1"/><rect x="416.5" y="414.6" width="9.5" height="9.5" fill="#e6e9ee" stroke="#b3bac4" stroke-width="1"/><path d="M418,418.1h6.5M418,420.6h6.5M420,416.1v6.5M422.5,416.1v6.5" stroke="#f7f8fa" stroke-width=".7"/><rect x="418.4" y="428.6" width="6" height="20" fill="#fff" stroke="#c4c4c4" stroke-width="1"/><path d="M421.4,425.3V428.6" stroke="#bbb" stroke-width="1"/><path d="M421.4,453.1V457.6" stroke="#1c1c1c" stroke-width="1"/><circle cx="421.4" cy="453.1" r="1.6" fill="#1c1c1c"/><rect x="418.4" y="457.6" width="6" height="20.5" fill="#fff" stroke="#1c1c1c" stroke-width="1.2"/><path d="M421.4,478.1V481.8" stroke="#1c1c1c" stroke-width="1"/><rect x="416.5" y="482.1" width="10" height="10" fill="#dfe6ef" stroke="#aab4c1" stroke-width="1"/><path d="M418.5,486.3L420.8,489.8L424.5,484.3" fill="none" stroke="#3b4a5e" stroke-width="1.2"/><path d="M177.3,509.8H173.4V614.1H442.8V509.8H199.70000000000002" fill="none" stroke="#93a8c4" stroke-width="1"/><rect x="206" y="528.8" width="1.2" height="1.2" fill="#333"/><rect x="206" y="532.8" width="1.2" height="1.2" fill="#333"/><rect x="211.3" y="523.6" width="36.3" height="16.2" fill="#fdfdfe" stroke="#aeb3ba" stroke-width="1"/><rect x="235.4" y="524.2" width="11.6" height="15" fill="#e9eff7" stroke="#c3cad3" stroke-width="1"/><path d="M239.5,530.8h4l-2,2z" fill="#555"/><path d="M247.5,532.0H263" fill="none" stroke="#1c1c1c" stroke-width="1.2"/><path d="M270,532.0L263,528.5V535.5Z" fill="#1c1c1c"/><rect x="270.5" y="525.6" width="28" height="28" fill="#fff" stroke="#444" stroke-width="1.3"/><rect x="270.5" y="558.1" width="28" height="28" fill="#fff" stroke="#444" stroke-width="1.3"/><rect x="323.7" y="519.5" width="19" height="57.3" fill="none" stroke="#c9c9c9" stroke-width="1"/><rect x="328.8" y="523.8" width="9.5" height="9.5" fill="#e6e9ee" stroke="#b3bac4" stroke-width="1"/><path d="M330.3,527.3h6.5M330.3,529.8h6.5M332.3,525.3v6.5M334.8,525.3v6.5" stroke="#f7f8fa" stroke-width=".7"/><path d="M298.5,545.6H328" fill="none" stroke="#1c1c1c" stroke-width="1.2"/><g opacity="0.3"><path d="M328.5,537.3L340,545.6L328.5,553.8Z" fill="#fff" stroke="#1c1c1c" stroke-width="1.3"/><path d="M333,533.3V540.8" stroke="#1c1c1c" stroke-width="1"/></g><path d="M340,545.6H375.4" fill="none" stroke="#1c1c1c" stroke-width="1.2"/><path d="M337.5,555.1L328.3,563.1L337.5,571.8Z" fill="#fff" stroke="#1c1c1c" stroke-width="1.3"/><path d="M298.5,563.1H328.3" fill="none" stroke="#1c1c1c" stroke-width="1.2"/><path d="M337.5,563.1H442.8" fill="none" stroke="#1c1c1c" stroke-width="1.2"/><rect x="371.8" y="519.5" width="16" height="39" fill="none" stroke="#c9c9c9" stroke-width="1"/><rect x="376.1" y="523.8" width="9.5" height="9.5" fill="#e6e9ee" stroke="#b3bac4" stroke-width="1"/><path d="M377.6,527.3h6.5M377.6,529.8h6.5M379.6,525.3v6.5M382.1,525.3v6.5" stroke="#f7f8fa" stroke-width=".7"/><path d="M375.4,539.2V549.6M377.8,539.2H375.4M375.4,549.6H377.8M378.5,538.8H384M378.5,545.4H384M378.5,551.8H384M384,536.1V545.4M384,536.1H385.8M384,551.8V553.8M384,545.6H393.2V563.1" fill="none" stroke="#1c1c1c" stroke-width="1.3"/><path d="M378.6,537.8V552.8" fill="none" stroke="#1c1c1c" stroke-width="1.3" stroke-dasharray="3.2,1.4"/><path d="M382.3,552.8h3.4l-1.7,2.6z" fill="#1c1c1c"/><circle cx="393.2" cy="563.1" r="1.6" fill="#1c1c1c"/><rect x="413.3" y="520.3" width="16.5" height="86.3" fill="none" stroke="#c9c9c9" stroke-width="1"/><rect x="416.5" y="524.6" width="9.5" height="9.5" fill="#e6e9ee" stroke="#b3bac4" stroke-width="1"/><path d="M418,528.1h6.5M418,530.6h6.5M420,526.1v6.5M422.5,526.1v6.5" stroke="#f7f8fa" stroke-width=".7"/><rect x="418.4" y="538.6" width="6" height="20" fill="#fff" stroke="#c4c4c4" stroke-width="1"/><path d="M421.4,535.3V538.6" stroke="#bbb" stroke-width="1"/><path d="M421.4,563.1V567.6" stroke="#1c1c1c" stroke-width="1"/><circle cx="421.4" cy="563.1" r="1.6" fill="#1c1c1c"/><rect x="418.4" y="567.6" width="6" height="20.5" fill="#fff" stroke="#1c1c1c" stroke-width="1.2"/><path d="M421.4,588.1V591.8" stroke="#1c1c1c" stroke-width="1"/><rect x="416.5" y="592.1" width="10" height="10" fill="#dfe6ef" stroke="#aab4c1" stroke-width="1"/><path d="M418.5,596.3L420.8,599.8L424.5,594.3" fill="none" stroke="#3b4a5e" stroke-width="1.2"/><path d="M46,454.8L53,451.3V458.3Z" fill="#1c1c1c"/><path d="M52,454.8H270.5" fill="none" stroke="#1c1c1c" stroke-width="1.2"/><path d="M76.5,454.8V553.6H99" fill="none" stroke="#1c1c1c" stroke-width="1.2"/><path d="M46,565.0L53,561.5V568.5Z" fill="#1c1c1c"/><path d="M52,565.0H270.5" fill="none" stroke="#1c1c1c" stroke-width="1.2"/><path d="M136,553.6H158.5V565.0" fill="none" stroke="#1c1c1c" stroke-width="1.2"/><circle cx="158.5" cy="565.0" r="1.6" fill="#1c1c1c"/><rect x="88.3" y="546.3" width="59.5" height="26.5" fill="none" stroke="#ababab" stroke-width="1"/><rect x="99.3" y="548.8" width="10" height="21" fill="#edf2f9" stroke="#d3dbe6" stroke-width="1"/><rect x="100.3" y="549.8" width="8" height="8.5" fill="#dde3ea" stroke="#bcc4ce" stroke-width=".8"/><rect x="100.3" y="559.8" width="8" height="8.5" fill="#e3e8ee" stroke="#c4ccd6" stroke-width=".8"/><rect x="125.8" y="548.8" width="10" height="21" fill="#edf2f9" stroke="#d3dbe6" stroke-width="1"/><rect x="126.8" y="549.8" width="8" height="8.5" fill="#dde3ea" stroke="#bcc4ce" stroke-width=".8"/><rect x="126.8" y="559.8" width="8" height="8.5" fill="#e3e8ee" stroke="#c4ccd6" stroke-width=".8"/><path d="M103.3,553.5999999999999H130.8" stroke="#4d6282" stroke-width="2.6"/><rect x="101.3" y="551.0999999999999" width="5" height="5" fill="#4d6282"/><rect x="127.8" y="551.0999999999999" width="5" height="5" fill="#4d6282"/><path d="M442.8,453.1H666.5" fill="none" stroke="#1c1c1c" stroke-width="1.2"/><circle cx="539.5" cy="453.1" r="1.6" fill="#1c1c1c"/><circle cx="654.5" cy="453.1" r="1.6" fill="#1c1c1c"/><path d="M539.5,453.1V552.4H517.5" fill="none" stroke="#1c1c1c" stroke-width="1.2"/><path d="M654.5,453.1V552.4H632.5" fill="none" stroke="#1c1c1c" stroke-width="1.2"/><rect x="666.5" y="448.70000000000005" width="10" height="10" fill="#fff" stroke="#222" stroke-width="1.3"/><path d="M442.8,563.2H666.5" fill="none" stroke="#1c1c1c" stroke-width="1.2"/><circle cx="458.5" cy="563.2" r="1.6" fill="#1c1c1c"/><circle cx="573.75" cy="563.2" r="1.6" fill="#1c1c1c"/><path d="M458.5,563.2V552.4H481" fill="none" stroke="#1c1c1c" stroke-width="1.2"/><path d="M573.75,563.2V552.4H596" fill="none" stroke="#1c1c1c" stroke-width="1.2"/><rect x="470" y="544.5" width="59.5" height="26.5" fill="none" stroke="#ababab" stroke-width="1"/><rect x="481" y="547.0" width="10" height="21" fill="#edf2f9" stroke="#d3dbe6" stroke-width="1"/><rect x="482" y="548.0" width="8" height="8.5" fill="#dde3ea" stroke="#bcc4ce" stroke-width=".8"/><rect x="482" y="558.0" width="8" height="8.5" fill="#e3e8ee" stroke="#c4ccd6" stroke-width=".8"/><rect x="507.5" y="547.0" width="10" height="21" fill="#edf2f9" stroke="#d3dbe6" stroke-width="1"/><rect x="508.5" y="548.0" width="8" height="8.5" fill="#dde3ea" stroke="#bcc4ce" stroke-width=".8"/><rect x="508.5" y="558.0" width="8" height="8.5" fill="#e3e8ee" stroke="#c4ccd6" stroke-width=".8"/><path d="M485,563.2H512.5" stroke="#4d6282" stroke-width="2.6"/><rect x="483" y="560.7" width="5" height="5" fill="#4d6282"/><rect x="509.5" y="560.7" width="5" height="5" fill="#4d6282"/><rect x="585" y="544.5" width="59.5" height="26.5" fill="none" stroke="#ababab" stroke-width="1"/><rect x="596" y="547.0" width="10" height="21" fill="#edf2f9" stroke="#d3dbe6" stroke-width="1"/><rect x="597" y="548.0" width="8" height="8.5" fill="#dde3ea" stroke="#bcc4ce" stroke-width=".8"/><rect x="597" y="558.0" width="8" height="8.5" fill="#e3e8ee" stroke="#c4ccd6" stroke-width=".8"/><rect x="622.5" y="547.0" width="10" height="21" fill="#edf2f9" stroke="#d3dbe6" stroke-width="1"/><rect x="623.5" y="548.0" width="8" height="8.5" fill="#dde3ea" stroke="#bcc4ce" stroke-width=".8"/><rect x="623.5" y="558.0" width="8" height="8.5" fill="#e3e8ee" stroke="#c4ccd6" stroke-width=".8"/><path d="M600,563.2H627.5" stroke="#4d6282" stroke-width="2.6"/><rect x="598" y="560.7" width="5" height="5" fill="#4d6282"/><rect x="624.5" y="560.7" width="5" height="5" fill="#4d6282"/><rect x="666.5" y="558.8000000000001" width="10" height="10" fill="#fff" stroke="#222" stroke-width="1.3"/>
</svg>
<div class="t" style="left:17.75px;top:-148px;font-size:10.4px;color:#1a1a1a;font-weight:normal;font-family:'Liberation Sans';font-style:normal;transform:scaleX(0.788);">HR Share</div>
<div class="t" style="left:446.50px;top:-148px;font-size:10.4px;color:#1a1a1a;font-weight:normal;font-family:'Liberation Sans';font-style:normal;transform:scaleX(0.802);">AND Share</div>
<div class="t" style="left:560.25px;top:-148px;font-size:10.4px;color:#1a1a1a;font-weight:normal;font-family:'Liberation Sans';font-style:normal;transform:scaleX(0.802);">XOR Share</div>
<div class="t" style="left:174.30px;top:-148px;font-size:10.4px;color:#1a1a1a;font-weight:normal;font-family:'Liberation Sans';font-style:normal;transform:scaleX(0.781);">Bit 0</div>
<div class="t" style="left:175.00px;top:-126px;font-size:10.4px;color:#1a1a1a;font-weight:normal;font-family:'Liberation Sans';font-style:normal;transform:scaleX(0.800);">DOUT</div>
<div class="t" style="left:209.00px;top:-126px;font-size:10.4px;color:#1a1a1a;font-weight:normal;font-family:'Liberation Sans';font-style:normal;transform:scaleX(0.667);">0</div>
<div class="t" style="left:268.00px;top:-124px;font-size:7px;color:#444;font-weight:normal;font-family:'Liberation Sans';font-style:normal;transform:scaleX(0.900);">D</div>
<div class="t" style="left:284.50px;top:-111px;font-size:7px;color:#444;font-weight:normal;font-family:'Liberation Sans';font-style:normal;transform:scaleX(0.833);">Q</div>
<div class="t" style="left:268.00px;top:-92px;font-size:7px;color:#444;font-weight:normal;font-family:'Liberation Sans';font-style:normal;transform:scaleX(0.833);">Q</div>
<div class="t" style="left:285.00px;top:-92px;font-size:7px;color:#444;font-weight:normal;font-family:'Liberation Sans';font-style:normal;transform:scaleX(0.900);">D</div>
<div class="t" style="left:298.00px;top:-128px;font-size:10.4px;color:#1a1a1a;font-weight:normal;font-family:'Liberation Sans';font-style:normal;transform:scaleX(0.762);">DIR:</div>
<div class="t" style="left:341.70px;top:-128px;font-size:10.4px;color:#1a1a1a;font-weight:normal;font-family:'Liberation Sans';font-style:normal;transform:scaleX(0.780);">PDR:</div>
<div class="t" style="left:387.20px;top:-128px;font-size:10.4px;color:#1a1a1a;font-weight:normal;font-family:'Liberation Sans';font-style:normal;transform:scaleX(0.764);">PSL:</div>
<div class="t" style="left:174.30px;top:-38px;font-size:10.4px;color:#1a1a1a;font-weight:normal;font-family:'Liberation Sans';font-style:normal;transform:scaleX(0.781);">Bit 1</div>
<div class="t" style="left:175.00px;top:-16px;font-size:10.4px;color:#1a1a1a;font-weight:normal;font-family:'Liberation Sans';font-style:normal;transform:scaleX(0.800);">DOUT</div>
<div class="t" style="left:209.00px;top:-16px;font-size:10.4px;color:#1a1a1a;font-weight:normal;font-family:'Liberation Sans';font-style:normal;transform:scaleX(0.667);">0</div>
<div class="t" style="left:268.00px;top:-14px;font-size:7px;color:#444;font-weight:normal;font-family:'Liberation Sans';font-style:normal;transform:scaleX(0.900);">D</div>
<div class="t" style="left:284.50px;top:-1px;font-size:7px;color:#444;font-weight:normal;font-family:'Liberation Sans';font-style:normal;transform:scaleX(0.833);">Q</div>
<div class="t" style="left:268.00px;top:18px;font-size:7px;color:#444;font-weight:normal;font-family:'Liberation Sans';font-style:normal;transform:scaleX(0.833);">Q</div>
<div class="t" style="left:285.00px;top:18px;font-size:7px;color:#444;font-weight:normal;font-family:'Liberation Sans';font-style:normal;transform:scaleX(0.900);">D</div>
<div class="t" style="left:298.00px;top:-18px;font-size:10.4px;color:#1a1a1a;font-weight:normal;font-family:'Liberation Sans';font-style:normal;transform:scaleX(0.762);">DIR:</div>
<div class="t" style="left:341.70px;top:-18px;font-size:10.4px;color:#1a1a1a;font-weight:normal;font-family:'Liberation Sans';font-style:normal;transform:scaleX(0.780);">PDR:</div>
<div class="t" style="left:387.20px;top:-18px;font-size:10.4px;color:#1a1a1a;font-weight:normal;font-family:'Liberation Sans';font-style:normal;transform:scaleX(0.764);">PSL:</div>
<div class="t" style="left:15.90px;top:-93px;font-size:10.4px;color:#1a1a1a;font-weight:normal;font-family:'Liberation Sans';font-style:normal;transform:scaleX(0.833);">DIN:</div>
<div class="t" style="left:15.90px;top:17px;font-size:10.4px;color:#1a1a1a;font-weight:normal;font-family:'Liberation Sans';font-style:normal;transform:scaleX(0.833);">DIN:</div>
<div class="t" style="left:680.25px;top:-95px;font-size:10.4px;color:#1a1a1a;font-weight:normal;font-family:'Liberation Sans';font-style:normal;transform:scaleX(0.822);">HET1[0]</div>
<div class="t" style="left:680.25px;top:15px;font-size:10.4px;color:#1a1a1a;font-weight:normal;font-family:'Liberation Sans';font-style:normal;transform:scaleX(0.822);">HET1[1]</div>
<div class="t" style="left:17.75px;top:74px;font-size:10.4px;color:#1a1a1a;font-weight:normal;font-family:'Liberation Sans';font-style:normal;transform:scaleX(0.788);">HR Share</div>
<div class="t" style="left:446.50px;top:74px;font-size:10.4px;color:#1a1a1a;font-weight:normal;font-family:'Liberation Sans';font-style:normal;transform:scaleX(0.802);">AND Share</div>
<div class="t" style="left:560.25px;top:74px;font-size:10.4px;color:#1a1a1a;font-weight:normal;font-family:'Liberation Sans';font-style:normal;transform:scaleX(0.802);">XOR Share</div>
<div class="t" style="left:174.30px;top:74px;font-size:10.4px;color:#1a1a1a;font-weight:normal;font-family:'Liberation Sans';font-style:normal;transform:scaleX(0.781);">Bit 2</div>
<div class="t" style="left:175.00px;top:96px;font-size:10.4px;color:#1a1a1a;font-weight:normal;font-family:'Liberation Sans';font-style:normal;transform:scaleX(0.800);">DOUT</div>
<div class="t" style="left:209.00px;top:96px;font-size:10.4px;color:#1a1a1a;font-weight:normal;font-family:'Liberation Sans';font-style:normal;transform:scaleX(0.667);">0</div>
<div class="t" style="left:268.00px;top:98px;font-size:7px;color:#444;font-weight:normal;font-family:'Liberation Sans';font-style:normal;transform:scaleX(0.900);">D</div>
<div class="t" style="left:284.50px;top:111px;font-size:7px;color:#444;font-weight:normal;font-family:'Liberation Sans';font-style:normal;transform:scaleX(0.833);">Q</div>
<div class="t" style="left:268.00px;top:130px;font-size:7px;color:#444;font-weight:normal;font-family:'Liberation Sans';font-style:normal;transform:scaleX(0.833);">Q</div>
<div class="t" style="left:285.00px;top:130px;font-size:7px;color:#444;font-weight:normal;font-family:'Liberation Sans';font-style:normal;transform:scaleX(0.900);">D</div>
<div class="t" style="left:298.00px;top:93px;font-size:10.4px;color:#1a1a1a;font-weight:normal;font-family:'Liberation Sans';font-style:normal;transform:scaleX(0.762);">DIR:</div>
<div class="t" style="left:341.70px;top:93px;font-size:10.4px;color:#1a1a1a;font-weight:normal;font-family:'Liberation Sans';font-style:normal;transform:scaleX(0.780);">PDR:</div>
<div class="t" style="left:387.20px;top:93px;font-size:10.4px;color:#1a1a1a;font-weight:normal;font-family:'Liberation Sans';font-style:normal;transform:scaleX(0.764);">PSL:</div>
<div class="t" style="left:174.30px;top:184px;font-size:10.4px;color:#1a1a1a;font-weight:normal;font-family:'Liberation Sans';font-style:normal;transform:scaleX(0.781);">Bit 3</div>
<div class="t" style="left:175.00px;top:206px;font-size:10.4px;color:#1a1a1a;font-weight:normal;font-family:'Liberation Sans';font-style:normal;transform:scaleX(0.800);">DOUT</div>
<div class="t" style="left:209.00px;top:206px;font-size:10.4px;color:#1a1a1a;font-weight:normal;font-family:'Liberation Sans';font-style:normal;transform:scaleX(0.667);">0</div>
<div class="t" style="left:268.00px;top:208px;font-size:7px;color:#444;font-weight:normal;font-family:'Liberation Sans';font-style:normal;transform:scaleX(0.900);">D</div>
<div class="t" style="left:284.50px;top:221px;font-size:7px;color:#444;font-weight:normal;font-family:'Liberation Sans';font-style:normal;transform:scaleX(0.833);">Q</div>
<div class="t" style="left:268.00px;top:240px;font-size:7px;color:#444;font-weight:normal;font-family:'Liberation Sans';font-style:normal;transform:scaleX(0.833);">Q</div>
<div class="t" style="left:285.00px;top:240px;font-size:7px;color:#444;font-weight:normal;font-family:'Liberation Sans';font-style:normal;transform:scaleX(0.900);">D</div>
<div class="t" style="left:298.00px;top:203px;font-size:10.4px;color:#1a1a1a;font-weight:normal;font-family:'Liberation Sans';font-style:normal;transform:scaleX(0.762);">DIR:</div>
<div class="t" style="left:341.70px;top:203px;font-size:10.4px;color:#1a1a1a;font-weight:normal;font-family:'Liberation Sans';font-style:normal;transform:scaleX(0.780);">PDR:</div>
<div class="t" style="left:387.20px;top:203px;font-size:10.4px;color:#1a1a1a;font-weight:normal;font-family:'Liberation Sans';font-style:normal;transform:scaleX(0.764);">PSL:</div>
<div class="t" style="left:15.90px;top:129px;font-size:10.4px;color:#1a1a1a;font-weight:normal;font-family:'Liberation Sans';font-style:normal;transform:scaleX(0.833);">DIN:</div>
<div class="t" style="left:15.90px;top:239px;font-size:10.4px;color:#1a1a1a;font-weight:normal;font-family:'Liberation Sans';font-style:normal;transform:scaleX(0.833);">DIN:</div>
<div class="t" style="left:680.25px;top:127px;font-size:10.4px;color:#1a1a1a;font-weight:normal;font-family:'Liberation Sans';font-style:normal;transform:scaleX(0.822);">HET1[2]</div>
<div class="t" style="left:680.25px;top:237px;font-size:10.4px;color:#1a1a1a;font-weight:normal;font-family:'Liberation Sans';font-style:normal;transform:scaleX(0.822);">HET1[3]</div>
<div class="t" style="left:17.75px;top:296px;font-size:10.4px;color:#1a1a1a;font-weight:normal;font-family:'Liberation Sans';font-style:normal;transform:scaleX(0.788);">HR Share</div>
<div class="t" style="left:446.50px;top:296px;font-size:10.4px;color:#1a1a1a;font-weight:normal;font-family:'Liberation Sans';font-style:normal;transform:scaleX(0.802);">AND Share</div>
<div class="t" style="left:560.25px;top:296px;font-size:10.4px;color:#1a1a1a;font-weight:normal;font-family:'Liberation Sans';font-style:normal;transform:scaleX(0.802);">XOR Share</div>
<div class="t" style="left:174.30px;top:296px;font-size:10.4px;color:#1a1a1a;font-weight:normal;font-family:'Liberation Sans';font-style:normal;transform:scaleX(0.781);">Bit 4</div>
<div class="t" style="left:175.00px;top:318px;font-size:10.4px;color:#1a1a1a;font-weight:normal;font-family:'Liberation Sans';font-style:normal;transform:scaleX(0.800);">DOUT</div>
<div class="t" style="left:209.00px;top:318px;font-size:10.4px;color:#1a1a1a;font-weight:normal;font-family:'Liberation Sans';font-style:normal;transform:scaleX(0.667);">0</div>
<div class="t" style="left:268.00px;top:320px;font-size:7px;color:#444;font-weight:normal;font-family:'Liberation Sans';font-style:normal;transform:scaleX(0.900);">D</div>
<div class="t" style="left:284.50px;top:333px;font-size:7px;color:#444;font-weight:normal;font-family:'Liberation Sans';font-style:normal;transform:scaleX(0.833);">Q</div>
<div class="t" style="left:268.00px;top:352px;font-size:7px;color:#444;font-weight:normal;font-family:'Liberation Sans';font-style:normal;transform:scaleX(0.833);">Q</div>
<div class="t" style="left:285.00px;top:352px;font-size:7px;color:#444;font-weight:normal;font-family:'Liberation Sans';font-style:normal;transform:scaleX(0.900);">D</div>
<div class="t" style="left:298.00px;top:316px;font-size:10.4px;color:#1a1a1a;font-weight:normal;font-family:'Liberation Sans';font-style:normal;transform:scaleX(0.762);">DIR:</div>
<div class="t" style="left:341.70px;top:316px;font-size:10.4px;color:#1a1a1a;font-weight:normal;font-family:'Liberation Sans';font-style:normal;transform:scaleX(0.780);">PDR:</div>
<div class="t" style="left:387.20px;top:316px;font-size:10.4px;color:#1a1a1a;font-weight:normal;font-family:'Liberation Sans';font-style:normal;transform:scaleX(0.764);">PSL:</div>
<div class="t" style="left:174.30px;top:406px;font-size:10.4px;color:#1a1a1a;font-weight:normal;font-family:'Liberation Sans';font-style:normal;transform:scaleX(0.781);">Bit 5</div>
<div class="t" style="left:175.00px;top:428px;font-size:10.4px;color:#1a1a1a;font-weight:normal;font-family:'Liberation Sans';font-style:normal;transform:scaleX(0.800);">DOUT</div>
<div class="t" style="left:209.00px;top:428px;font-size:10.4px;color:#1a1a1a;font-weight:normal;font-family:'Liberation Sans';font-style:normal;transform:scaleX(0.667);">0</div>
<div class="t" style="left:268.00px;top:430px;font-size:7px;color:#444;font-weight:normal;font-family:'Liberation Sans';font-style:normal;transform:scaleX(0.900);">D</div>
<div class="t" style="left:284.50px;top:443px;font-size:7px;color:#444;font-weight:normal;font-family:'Liberation Sans';font-style:normal;transform:scaleX(0.833);">Q</div>
<div class="t" style="left:268.00px;top:462px;font-size:7px;color:#444;font-weight:normal;font-family:'Liberation Sans';font-style:normal;transform:scaleX(0.833);">Q</div>
<div class="t" style="left:285.00px;top:462px;font-size:7px;color:#444;font-weight:normal;font-family:'Liberation Sans';font-style:normal;transform:scaleX(0.900);">D</div>
<div class="t" style="left:298.00px;top:426px;font-size:10.4px;color:#1a1a1a;font-weight:normal;font-family:'Liberation Sans';font-style:normal;transform:scaleX(0.762);">DIR:</div>
<div class="t" style="left:341.70px;top:426px;font-size:10.4px;color:#1a1a1a;font-weight:normal;font-family:'Liberation Sans';font-style:normal;transform:scaleX(0.780);">PDR:</div>
<div class="t" style="left:387.20px;top:426px;font-size:10.4px;color:#1a1a1a;font-weight:normal;font-family:'Liberation Sans';font-style:normal;transform:scaleX(0.764);">PSL:</div>
<div class="t" style="left:15.90px;top:351px;font-size:10.4px;color:#1a1a1a;font-weight:normal;font-family:'Liberation Sans';font-style:normal;transform:scaleX(0.833);">DIN:</div>
<div class="t" style="left:15.90px;top:461px;font-size:10.4px;color:#1a1a1a;font-weight:normal;font-family:'Liberation Sans';font-style:normal;transform:scaleX(0.833);">DIN:</div>
<div class="t" style="left:680.25px;top:349px;font-size:10.4px;color:#1a1a1a;font-weight:normal;font-family:'Liberation Sans';font-style:normal;transform:scaleX(0.822);">HET1[4]</div>
<div class="t" style="left:680.25px;top:460px;font-size:10.4px;color:#1a1a1a;font-weight:normal;font-family:'Liberation Sans';font-style:normal;transform:scaleX(0.822);">HET1[5]</div>
</div>
<div class="a" style="left:337.5px;top:214px;width:159px;height:43.5px;background:linear-gradient(180deg,#ffffff,#e4ebf5);border:1px solid #7d8590;border-radius:2px;box-shadow:2px 2px 2px rgba(0,0,0,.3)"></div>
<div class="t" style="left:342.00px;top:220px;font-size:10px;color:#4a4a4a;font-weight:bold;font-family:'Liberation Sans';font-style:normal;transform:scaleX(0.941);">Bit 2 Direction</div>
<div class="t" style="left:348.50px;top:240px;font-size:10px;color:#4a4a4a;font-weight:normal;font-family:'Liberation Sans';font-style:normal;transform:scaleX(0.948);">Enable Output Direction for Bit2</div>
<div class="a" style="left:1088px;top:99px;width:15px;height:470px;background:linear-gradient(90deg,#e9e9ea,#f3f3f4 50%,#e6e6e8);border-left:1px solid #e0e0e0"></div>
<div class="a" style="left:1092px;top:104px;width:0;height:0;border-left:3.5px solid transparent;border-right:3.5px solid transparent;border-bottom:4px solid #2a2a2a"></div>
<div class="a" style="left:1092px;top:559px;width:0;height:0;border-left:3.5px solid transparent;border-right:3.5px solid transparent;border-top:4px solid #2a2a2a"></div>
<div class="a" style="left:1089px;top:191px;width:12px;height:226px;background:linear-gradient(90deg,#f4f4f5,#e2e2e4 50%,#d2d2d5);border:1px solid #9c9ca0;border-radius:2px"></div>
<div class="a" style="left:1092px;top:302px;width:6px;height:5px;border-top:1px solid #777;border-bottom:1px solid #777"></div><div class="a" style="left:1092px;top:304px;width:6px;height:1px;background:#777"></div>
<div class="a" style="left:6px;top:569px;width:1082px;height:14px;background:linear-gradient(180deg,#e3e3e4,#f1f1f2 50%,#e8e8ea);border-bottom:1px solid #c9cbd4"></div>
<div class="a" style="left:11px;top:573px;width:0;height:0;border-top:3.5px solid transparent;border-bottom:3.5px solid transparent;border-right:4px solid #2a2a2a"></div>
<div class="a" style="left:1078px;top:573px;width:0;height:0;border-top:3.5px solid transparent;border-bottom:3.5px solid transparent;border-left:4px solid #2a2a2a"></div>
<div class="a" style="left:22px;top:570px;width:901px;height:12px;background:linear-gradient(180deg,#f2f2f3,#e2e2e4 45%,#cbcbce 55%,#d8d8db);border:1px solid #a8a8ac;border-radius:2px"></div>
<div class="a" style="left:470px;top:573px;width:5px;height:6px;border-left:1px solid #777;border-right:1px solid #777"></div><div class="a" style="left:472px;top:573px;width:1px;height:6px;background:#777"></div>
<div class="a" style="left:1088px;top:569px;width:15px;height:14px;background:#f0f0f0"></div>
<div class="a" style="left:6px;top:583px;width:1097px;height:5px;background:#e3f2fc"></div>
<div class="a" style="left:0;top:588px;width:1112px;height:5px;background:linear-gradient(180deg,#9fb9dc,#6f8fbf)"></div>
<div class="a" style="left:0;top:593px;width:1107px;height:19px;background:linear-gradient(180deg,#dfedfd,#c9def9 50%,#bbd5f6);border-bottom:1px solid #8da5c4"></div>
<div class="t" style="left:5.50px;top:599px;font-size:10.2px;color:#24406a;font-weight:normal;font-family:'Liberation Sans';font-style:normal;transform:scaleX(0.952);">Output</div>
<svg class="a" style="left:0;top:0" width="1280" height="720" viewBox="0 0 1280 720"><path d="M1070.3,601.3h6.5l-3.25,3z" fill="#15253d"/><path d="M1085.3,598.3v5M1088.1,598.3v5" stroke="#15253d" stroke-width="1.6"/><path d="M1084.5,603.5h4.4" stroke="#15253d" stroke-width="1"/><path d="M1086.7,603.3v2.5" stroke="#5a6a80" stroke-width="1"/><path d="M1096.2,599.2l6.5,5.8M1102.7,599.2l-6.5,5.8" stroke="#15253d" stroke-width="1.5"/></svg>
<div class="a" style="left:0;top:612px;width:1107px;height:57px;background:#fff;border-left:1px solid #8da5c4"></div>
<div class="t" style="left:14.40px;top:615px;font-size:9.5px;color:#1a1a1a;font-weight:normal;font-family:'Liberation Mono';font-style:normal;transform:scaleX(0.984);">Loading: FEE: 'FEEv000.xml'</div>
<div class="t" style="left:14.40px;top:626px;font-size:9.5px;color:#1a1a1a;font-weight:normal;font-family:'Liberation Mono';font-style:normal;transform:scaleX(0.977);">Load complete</div>
<div class="a" style="left:1092px;top:613px;width:14px;height:43px;background:#eeeeef"></div>
<div class="a" style="left:1096px;top:617px;width:0;height:0;border-left:3px solid transparent;border-right:3px solid transparent;border-bottom:3.5px solid #2a2a2a"></div>
<div class="a" style="left:1093px;top:625px;width:12px;height:11px;background:linear-gradient(90deg,#f4f4f5,#d8d8db);border:1px solid #a0a0a4;border-radius:1px"></div>
<div class="a" style="left:1096px;top:647px;width:0;height:0;border-left:3px solid transparent;border-right:3px solid transparent;border-top:3.5px solid #2a2a2a"></div>
<div class="a" style="left:1px;top:656px;width:1106px;height:13px;background:linear-gradient(180deg,#e6e6e7,#f0f0f1 50%,#e4e4e6);border-bottom:2px solid #8a9099"></div>
<div class="a" style="left:6px;top:660px;width:0;height:0;border-top:3px solid transparent;border-bottom:3px solid transparent;border-right:3.5px solid #2a2a2a"></div>
<div class="a" style="left:15px;top:657px;width:12px;height:11px;background:linear-gradient(180deg,#f4f4f5,#d8d8db);border:1px solid #a0a0a4;border-radius:1px"></div>
<div class="a" style="left:1086px;top:660px;width:0;height:0;border-top:3px solid transparent;border-bottom:3px solid transparent;border-left:3.5px solid #2a2a2a"></div>
<div class="a" style="left:1112px;top:57px;width:168px;height:18px;background:linear-gradient(180deg,#d3e6fb,#c4dbf8)"></div>
<div class="t" style="left:1117.50px;top:62px;font-size:10.2px;color:#2a4166;font-weight:normal;font-family:'Liberation Sans';font-style:normal;transform:scaleX(0.882);">Device Explorer</div>
<svg class="a" style="left:0;top:0" width="1280" height="720" viewBox="0 0 1280 720"><path d="M1241.2,64.5h6.5l-3.25,3z" fill="#15253d"/><path d="M1256.8,61v5M1259.6,61v5" stroke="#15253d" stroke-width="1.6"/><path d="M1256,66.2h4.4" stroke="#15253d" stroke-width="1"/><path d="M1258.2,66v2.5" stroke="#5a6a80" stroke-width="1"/><path d="M1266.9,62.2l6.5,5.8M1273.4,62.2l-6.5,5.8" stroke="#15253d" stroke-width="1.5"/></svg>
<div class="a" style="left:1112px;top:75px;width:168px;height:576px;background:#fff"></div>
<div class="a" style="left:1136px;top:88px;width:0;height:548px;border-left:1px dotted #8a8a8a"></div>
<div class="a" style="left:1151px;top:103px;width:0;height:533px;border-left:1px dotted #8a8a8a"></div>
<div class="a" style="left:1117.5px;top:78px;width:8px;height:8px;border:1px solid #9aa3ad;background:#fff"></div><div class="a" style="left:1119.5px;top:81.5px;width:4px;height:1px;background:#333"></div>
<div class="a" style="left:1131px;top:75px;width:11px;height:12px;background:linear-gradient(135deg,#e8eef5,#8d9cb0);border:1px solid #5b6a80;border-radius:1px"></div>
<div class="t" style="left:1147.80px;top:78px;font-size:10.2px;color:#1a1a1a;font-weight:bold;font-family:'Liberation Sans';font-style:normal;transform:scaleX(0.925);">RM57L843ZWT</div>
<div class="a" style="left:1133px;top:92.5px;width:8px;height:8px;border:1px solid #b0b8c2;background:#fff"></div><div class="a" style="left:1135px;top:96px;width:4px;height:1px;background:#666"></div>
<div class="a" style="left:1145px;top:91px;width:12px;height:10px;background:linear-gradient(180deg,#f9e7a0,#e0b84e);border:1px solid #c59a2e;border-radius:1px"></div>
<div class="t" style="left:1162.60px;top:92px;font-size:10.2px;color:#1a1a1a;font-weight:bold;font-family:'Liberation Sans';font-style:normal;transform:scaleX(0.836);">SYSTEM</div>
<div class="a" style="left:1152px;top:111.3px;width:9px;height:0;border-top:1px dotted #8a8a8a"></div>
<div class="a" style="left:1162px;top:105.3px;width:9px;height:12px;background:linear-gradient(135deg,#ffffff,#d6e3f2);border:1px solid #5f7da3;border-radius:1px"></div>
<div class="t" style="left:1163.5px;top:107.3px;font-size:7.5px;font-weight:bold;color:#2b4f80;">h</div>
<div class="t" style="left:1178.00px;top:107px;font-size:10px;color:#111;font-weight:normal;font-family:'Liberation Sans';font-style:normal;transform:scaleX(1.000);transform:scaleX(0.922);-webkit-text-stroke:0.1px #111">HL_hal_stdtypes.h</div>
<div class="a" style="left:1152px;top:125.7px;width:9px;height:0;border-top:1px dotted #8a8a8a"></div>
<div class="a" style="left:1162px;top:119.7px;width:9px;height:12px;background:linear-gradient(135deg,#ffffff,#d6e3f2);border:1px solid #5f7da3;border-radius:1px"></div>
<div class="t" style="left:1163.5px;top:121.7px;font-size:7.5px;font-weight:bold;color:#2b4f80;">h</div>
<div class="t" style="left:1178.00px;top:122px;font-size:10px;color:#111;font-weight:normal;font-family:'Liberation Sans';font-style:normal;transform:scaleX(1.000);transform:scaleX(0.922);-webkit-text-stroke:0.1px #111">HL_sys_common.h</div>
<div class="a" style="left:1152px;top:140.1px;width:9px;height:0;border-top:1px dotted #8a8a8a"></div>
<div class="a" style="left:1162px;top:134.1px;width:9px;height:12px;background:linear-gradient(135deg,#ffffff,#d6e3f2);border:1px solid #5f7da3;border-radius:1px"></div>
<div class="t" style="left:1163.5px;top:136.1px;font-size:7.5px;font-weight:bold;color:#2b4f80;">h</div>
<div class="t" style="left:1178.00px;top:136px;font-size:10px;color:#111;font-weight:normal;font-family:'Liberation Sans';font-style:normal;transform:scaleX(1.000);transform:scaleX(0.922);-webkit-text-stroke:0.1px #111">HL_reg_system.h</div>
<div class="a" style="left:1152px;top:154.5px;width:9px;height:0;border-top:1px dotted #8a8a8a"></div>
<div class="a" style="left:1162px;top:148.5px;width:9px;height:12px;background:linear-gradient(135deg,#ffffff,#d6e3f2);border:1px solid #5f7da3;border-radius:1px"></div>
<div class="t" style="left:1163.5px;top:150.5px;font-size:7.5px;font-weight:bold;color:#2b4f80;">h</div>
<div class="t" style="left:1178.00px;top:151px;font-size:10px;color:#111;font-weight:normal;font-family:'Liberation Sans';font-style:normal;transform:scaleX(1.000);transform:scaleX(0.922);-webkit-text-stroke:0.1px #111">HL_reg_flash.h</div>
<div class="a" style="left:1152px;top:168.9px;width:9px;height:0;border-top:1px dotted #8a8a8a"></div>
<div class="a" style="left:1162px;top:162.9px;width:9px;height:12px;background:linear-gradient(135deg,#ffffff,#d6e3f2);border:1px solid #5f7da3;border-radius:1px"></div>
<div class="t" style="left:1163.5px;top:164.9px;font-size:7.5px;font-weight:bold;color:#2b4f80;">h</div>
<div class="t" style="left:1178.00px;top:165px;font-size:10px;color:#111;font-weight:normal;font-family:'Liberation Sans';font-style:normal;transform:scaleX(1.000);transform:scaleX(0.922);-webkit-text-stroke:0.1px #111">HL_reg_l2ramw.h</div>
<div class="a" style="left:1152px;top:183.3px;width:9px;height:0;border-top:1px dotted #8a8a8a"></div>
<div class="a" style="left:1162px;top:177.3px;width:9px;height:12px;background:linear-gradient(135deg,#ffffff,#d6e3f2);border:1px solid #5f7da3;border-radius:1px"></div>
<div class="t" style="left:1163.5px;top:179.3px;font-size:7.5px;font-weight:bold;color:#2b4f80;">h</div>
<div class="t" style="left:1178.00px;top:179px;font-size:10px;color:#111;font-weight:normal;font-family:'Liberation Sans';font-style:normal;transform:scaleX(1.000);transform:scaleX(0.922);-webkit-text-stroke:0.1px #111">HL_reg_vim.h</div>
<div class="a" style="left:1152px;top:197.8px;width:9px;height:0;border-top:1px dotted #8a8a8a"></div>
<div class="a" style="left:1162px;top:191.8px;width:9px;height:12px;background:linear-gradient(135deg,#ffffff,#d6e3f2);border:1px solid #5f7da3;border-radius:1px"></div>
<div class="t" style="left:1163.5px;top:193.8px;font-size:7.5px;font-weight:bold;color:#2b4f80;">h</div>
<div class="t" style="left:1178.00px;top:194px;font-size:10px;color:#111;font-weight:normal;font-family:'Liberation Sans';font-style:normal;transform:scaleX(1.000);transform:scaleX(0.922);-webkit-text-stroke:0.1px #111">HL_reg_pbist.h</div>
<div class="a" style="left:1152px;top:212.2px;width:9px;height:0;border-top:1px dotted #8a8a8a"></div>
<div class="a" style="left:1162px;top:206.2px;width:9px;height:12px;background:linear-gradient(135deg,#ffffff,#d6e3f2);border:1px solid #5f7da3;border-radius:1px"></div>
<div class="t" style="left:1163.5px;top:208.2px;font-size:7.5px;font-weight:bold;color:#2b4f80;">h</div>
<div class="t" style="left:1178.00px;top:208px;font-size:10px;color:#111;font-weight:normal;font-family:'Liberation Sans';font-style:normal;transform:scaleX(1.000);transform:scaleX(0.922);-webkit-text-stroke:0.1px #111">HL_reg_stc.h</div>
<div class="a" style="left:1152px;top:226.6px;width:9px;height:0;border-top:1px dotted #8a8a8a"></div>
<div class="a" style="left:1162px;top:220.6px;width:9px;height:12px;background:linear-gradient(135deg,#ffffff,#d6e3f2);border:1px solid #5f7da3;border-radius:1px"></div>
<div class="t" style="left:1163.5px;top:222.6px;font-size:7.5px;font-weight:bold;color:#2b4f80;">h</div>
<div class="t" style="left:1178.00px;top:223px;font-size:10px;color:#111;font-weight:normal;font-family:'Liberation Sans';font-style:normal;transform:scaleX(1.000);transform:scaleX(0.922);-webkit-text-stroke:0.1px #111">HL_reg_efc.h</div>
<div class="a" style="left:1152px;top:241.0px;width:9px;height:0;border-top:1px dotted #8a8a8a"></div>
<div class="a" style="left:1162px;top:235.0px;width:9px;height:12px;background:linear-gradient(135deg,#ffffff,#d6e3f2);border:1px solid #5f7da3;border-radius:1px"></div>
<div class="t" style="left:1163.5px;top:237.0px;font-size:7.5px;font-weight:bold;color:#2b4f80;">h</div>
<div class="t" style="left:1178.00px;top:237px;font-size:10px;color:#111;font-weight:normal;font-family:'Liberation Sans';font-style:normal;transform:scaleX(1.000);transform:scaleX(0.922);-webkit-text-stroke:0.1px #111">HL_reg_pcr.h</div>
<div class="a" style="left:1152px;top:255.4px;width:9px;height:0;border-top:1px dotted #8a8a8a"></div>
<div class="a" style="left:1162px;top:249.4px;width:9px;height:12px;background:linear-gradient(135deg,#ffffff,#d6e3f2);border:1px solid #5f7da3;border-radius:1px"></div>
<div class="t" style="left:1163.5px;top:251.4px;font-size:7.5px;font-weight:bold;color:#2b4f80;">h</div>
<div class="t" style="left:1178.00px;top:251px;font-size:10px;color:#111;font-weight:normal;font-family:'Liberation Sans';font-style:normal;transform:scaleX(1.000);transform:scaleX(0.922);-webkit-text-stroke:0.1px #111">HL_reg_pmm.h</div>
<div class="a" style="left:1152px;top:269.8px;width:9px;height:0;border-top:1px dotted #8a8a8a"></div>
<div class="a" style="left:1162px;top:263.8px;width:9px;height:12px;background:linear-gradient(135deg,#ffffff,#d6e3f2);border:1px solid #5f7da3;border-radius:1px"></div>
<div class="t" style="left:1163.5px;top:265.8px;font-size:7.5px;font-weight:bold;color:#2b4f80;">h</div>
<div class="t" style="left:1178.00px;top:266px;font-size:10px;color:#111;font-weight:normal;font-family:'Liberation Sans';font-style:normal;transform:scaleX(1.000);transform:scaleX(0.922);-webkit-text-stroke:0.1px #111">HL_reg_dma.h</div>
<div class="a" style="left:1152px;top:284.2px;width:9px;height:0;border-top:1px dotted #8a8a8a"></div>
<div class="a" style="left:1162px;top:278.2px;width:9px;height:12px;background:linear-gradient(135deg,#ffffff,#d6e3f2);border:1px solid #5f7da3;border-radius:1px"></div>
<div class="t" style="left:1163.5px;top:280.2px;font-size:7.5px;font-weight:bold;color:#2b4f80;">h</div>
<div class="t" style="left:1178.00px;top:280px;font-size:10px;color:#111;font-weight:normal;font-family:'Liberation Sans';font-style:normal;transform:scaleX(1.000);transform:scaleX(0.922);-webkit-text-stroke:0.1px #111">HL_reg_ccmr5.h</div>
<div class="a" style="left:1152px;top:298.6px;width:9px;height:0;border-top:1px dotted #8a8a8a"></div>
<div class="a" style="left:1162px;top:292.6px;width:9px;height:12px;background:linear-gradient(135deg,#ffffff,#d6e3f2);border:1px solid #5f7da3;border-radius:1px"></div>
<div class="t" style="left:1163.5px;top:294.6px;font-size:7.5px;font-weight:bold;color:#2b4f80;">h</div>
<div class="t" style="left:1178.00px;top:295px;font-size:10px;color:#111;font-weight:normal;font-family:'Liberation Sans';font-style:normal;transform:scaleX(1.000);transform:scaleX(0.922);-webkit-text-stroke:0.1px #111">HL_sys_core.h</div>
<div class="a" style="left:1152px;top:313.0px;width:9px;height:0;border-top:1px dotted #8a8a8a"></div>
<div class="a" style="left:1162px;top:307.0px;width:9px;height:12px;background:linear-gradient(135deg,#ffffff,#d6e3f2);border:1px solid #5f7da3;border-radius:1px"></div>
<div class="t" style="left:1163.5px;top:309.0px;font-size:7.5px;font-weight:bold;color:#2b4f80;">h</div>
<div class="t" style="left:1178.00px;top:309px;font-size:10px;color:#111;font-weight:normal;font-family:'Liberation Sans';font-style:normal;transform:scaleX(1.000);transform:scaleX(0.922);-webkit-text-stroke:0.1px #111">HL_system.h</div>
<div class="a" style="left:1152px;top:327.4px;width:9px;height:0;border-top:1px dotted #8a8a8a"></div>
<div class="a" style="left:1162px;top:321.4px;width:9px;height:12px;background:linear-gradient(135deg,#ffffff,#d6e3f2);border:1px solid #5f7da3;border-radius:1px"></div>
<div class="t" style="left:1163.5px;top:323.4px;font-size:7.5px;font-weight:bold;color:#2b4f80;">h</div>
<div class="t" style="left:1178.00px;top:323px;font-size:10px;color:#111;font-weight:normal;font-family:'Liberation Sans';font-style:normal;transform:scaleX(1.000);transform:scaleX(0.922);-webkit-text-stroke:0.1px #111">HL_sys_vim.h</div>
<div class="a" style="left:1152px;top:341.9px;width:9px;height:0;border-top:1px dotted #8a8a8a"></div>
<div class="a" style="left:1162px;top:335.9px;width:9px;height:12px;background:linear-gradient(135deg,#ffffff,#d6e3f2);border:1px solid #5f7da3;border-radius:1px"></div>
<div class="t" style="left:1163.5px;top:337.9px;font-size:7.5px;font-weight:bold;color:#2b4f80;">h</div>
<div class="t" style="left:1178.00px;top:338px;font-size:10px;color:#111;font-weight:normal;font-family:'Liberation Sans';font-style:normal;transform:scaleX(1.000);transform:scaleX(0.922);-webkit-text-stroke:0.1px #111">HL_sys_mpu.h</div>
<div class="a" style="left:1152px;top:356.3px;width:9px;height:0;border-top:1px dotted #8a8a8a"></div>
<div class="a" style="left:1162px;top:350.3px;width:9px;height:12px;background:linear-gradient(135deg,#ffffff,#d6e3f2);border:1px solid #5f7da3;border-radius:1px"></div>
<div class="t" style="left:1163.5px;top:352.3px;font-size:7.5px;font-weight:bold;color:#2b4f80;">h</div>
<div class="t" style="left:1178.00px;top:352px;font-size:10px;color:#111;font-weight:normal;font-family:'Liberation Sans';font-style:normal;transform:scaleX(1.000);transform:scaleX(0.922);-webkit-text-stroke:0.1px #111">HL_sys_pmu.h</div>
<div class="a" style="left:1152px;top:370.7px;width:9px;height:0;border-top:1px dotted #8a8a8a"></div>
<div class="a" style="left:1162px;top:364.7px;width:9px;height:12px;background:linear-gradient(135deg,#ffffff,#d6e3f2);border:1px solid #5f7da3;border-radius:1px"></div>
<div class="t" style="left:1163.5px;top:366.7px;font-size:7.5px;font-weight:bold;color:#2b4f80;">h</div>
<div class="t" style="left:1178.00px;top:367px;font-size:10px;color:#111;font-weight:normal;font-family:'Liberation Sans';font-style:normal;transform:scaleX(1.000);transform:scaleX(0.922);-webkit-text-stroke:0.1px #111">HL_sys_pcr.h</div>
<div class="a" style="left:1152px;top:385.1px;width:9px;height:0;border-top:1px dotted #8a8a8a"></div>
<div class="a" style="left:1162px;top:379.1px;width:9px;height:12px;background:linear-gradient(135deg,#ffffff,#d6e3f2);border:1px solid #5f7da3;border-radius:1px"></div>
<div class="t" style="left:1163.5px;top:381.1px;font-size:7.5px;font-weight:bold;color:#2b4f80;">h</div>
<div class="t" style="left:1178.00px;top:381px;font-size:10px;color:#111;font-weight:normal;font-family:'Liberation Sans';font-style:normal;transform:scaleX(1.000);transform:scaleX(0.922);-webkit-text-stroke:0.1px #111">HL_sys_pmm.h</div>
<div class="a" style="left:1152px;top:399.5px;width:9px;height:0;border-top:1px dotted #8a8a8a"></div>
<div class="a" style="left:1162px;top:393.5px;width:9px;height:12px;background:linear-gradient(135deg,#ffffff,#d6e3f2);border:1px solid #5f7da3;border-radius:1px"></div>
<div class="t" style="left:1163.5px;top:395.5px;font-size:7.5px;font-weight:bold;color:#2b4f80;">h</div>
<div class="t" style="left:1178.00px;top:396px;font-size:10px;color:#111;font-weight:normal;font-family:'Liberation Sans';font-style:normal;transform:scaleX(1.000);transform:scaleX(0.922);-webkit-text-stroke:0.1px #111">HL_sys_dma.h</div>
<div class="a" style="left:1152px;top:413.9px;width:9px;height:0;border-top:1px dotted #8a8a8a"></div>
<div class="a" style="left:1162px;top:407.9px;width:9px;height:12px;background:linear-gradient(135deg,#ffffff,#d6e3f2);border:1px solid #5f7da3;border-radius:1px"></div>
<div class="t" style="left:1163.5px;top:409.9px;font-size:7.5px;font-weight:bold;color:#2b4f80;">&#x2261;</div>
<div class="t" style="left:1178.00px;top:410px;font-size:10px;color:#111;font-weight:normal;font-family:'Liberation Sans';font-style:normal;transform:scaleX(1.000);transform:scaleX(0.922);-webkit-text-stroke:0.1px #111">HL_sys_core.asm</div>
<div class="a" style="left:1152px;top:428.3px;width:9px;height:0;border-top:1px dotted #8a8a8a"></div>
<div class="a" style="left:1162px;top:422.3px;width:9px;height:12px;background:linear-gradient(135deg,#ffffff,#d6e3f2);border:1px solid #5f7da3;border-radius:1px"></div>
<div class="t" style="left:1163.5px;top:424.3px;font-size:7.5px;font-weight:bold;color:#2b4f80;">&#x2261;</div>
<div class="t" style="left:1178.00px;top:424px;font-size:10px;color:#111;font-weight:normal;font-family:'Liberation Sans';font-style:normal;transform:scaleX(1.000);transform:scaleX(0.922);-webkit-text-stroke:0.1px #111">HL_sys_intvecs.asm</div>
<div class="a" style="left:1152px;top:442.7px;width:9px;height:0;border-top:1px dotted #8a8a8a"></div>
<div class="a" style="left:1162px;top:436.7px;width:9px;height:12px;background:linear-gradient(135deg,#ffffff,#d6e3f2);border:1px solid #5f7da3;border-radius:1px"></div>
<div class="t" style="left:1163.5px;top:438.7px;font-size:7.5px;font-weight:bold;color:#2b4f80;">&#x2261;</div>
<div class="t" style="left:1178.00px;top:439px;font-size:10px;color:#111;font-weight:normal;font-family:'Liberation Sans';font-style:normal;transform:scaleX(1.000);transform:scaleX(0.922);-webkit-text-stroke:0.1px #111">HL_sys_mpu.asm</div>
<div class="a" style="left:1152px;top:457.1px;width:9px;height:0;border-top:1px dotted #8a8a8a"></div>
<div class="a" style="left:1162px;top:451.1px;width:9px;height:12px;background:linear-gradient(135deg,#ffffff,#d6e3f2);border:1px solid #5f7da3;border-radius:1px"></div>
<div class="t" style="left:1163.5px;top:453.1px;font-size:7.5px;font-weight:bold;color:#2b4f80;">&#x2261;</div>
<div class="t" style="left:1178.00px;top:453px;font-size:10px;color:#111;font-weight:normal;font-family:'Liberation Sans';font-style:normal;transform:scaleX(1.000);transform:scaleX(0.922);-webkit-text-stroke:0.1px #111">HL_sys_pmu.asm</div>
<div class="a" style="left:1152px;top:471.6px;width:9px;height:0;border-top:1px dotted #8a8a8a"></div>
<div class="a" style="left:1162px;top:465.6px;width:9px;height:12px;background:linear-gradient(135deg,#ffffff,#d6e3f2);border:1px solid #5f7da3;border-radius:1px"></div>
<div class="t" style="left:1163.5px;top:467.6px;font-size:7.5px;font-weight:bold;color:#2b4f80;">c</div>
<div class="t" style="left:1178.00px;top:468px;font-size:10px;color:#111;font-weight:normal;font-family:'Liberation Sans';font-style:normal;transform:scaleX(1.000);transform:scaleX(0.922);-webkit-text-stroke:0.1px #111">HL_sys_pcr.c</div>
<div class="a" style="left:1152px;top:486.0px;width:9px;height:0;border-top:1px dotted #8a8a8a"></div>
<div class="a" style="left:1162px;top:480.0px;width:9px;height:12px;background:linear-gradient(135deg,#ffffff,#d6e3f2);border:1px solid #5f7da3;border-radius:1px"></div>
<div class="t" style="left:1163.5px;top:482.0px;font-size:7.5px;font-weight:bold;color:#2b4f80;">c</div>
<div class="t" style="left:1178.00px;top:482px;font-size:10px;color:#111;font-weight:normal;font-family:'Liberation Sans';font-style:normal;transform:scaleX(1.000);transform:scaleX(0.922);-webkit-text-stroke:0.1px #111">HL_sys_pmm.c</div>
<div class="a" style="left:1152px;top:500.4px;width:9px;height:0;border-top:1px dotted #8a8a8a"></div>
<div class="a" style="left:1162px;top:494.4px;width:9px;height:12px;background:linear-gradient(135deg,#ffffff,#d6e3f2);border:1px solid #5f7da3;border-radius:1px"></div>
<div class="t" style="left:1163.5px;top:496.4px;font-size:7.5px;font-weight:bold;color:#2b4f80;">c</div>
<div class="t" style="left:1178.00px;top:496px;font-size:10px;color:#111;font-weight:normal;font-family:'Liberation Sans';font-style:normal;transform:scaleX(1.000);transform:scaleX(0.922);-webkit-text-stroke:0.1px #111">HL_sys_dma.c</div>
<div class="a" style="left:1152px;top:514.8px;width:9px;height:0;border-top:1px dotted #8a8a8a"></div>
<div class="a" style="left:1162px;top:508.8px;width:9px;height:12px;background:linear-gradient(135deg,#ffffff,#d6e3f2);border:1px solid #5f7da3;border-radius:1px"></div>
<div class="t" style="left:1163.5px;top:510.8px;font-size:7.5px;font-weight:bold;color:#2b4f80;">c</div>
<div class="t" style="left:1178.00px;top:511px;font-size:10px;color:#111;font-weight:normal;font-family:'Liberation Sans';font-style:normal;transform:scaleX(1.000);transform:scaleX(0.922);-webkit-text-stroke:0.1px #111">HL_system.c</div>
<div class="a" style="left:1152px;top:529.2px;width:9px;height:0;border-top:1px dotted #8a8a8a"></div>
<div class="a" style="left:1162px;top:523.2px;width:9px;height:12px;background:linear-gradient(135deg,#ffffff,#d6e3f2);border:1px solid #5f7da3;border-radius:1px"></div>
<div class="t" style="left:1163.5px;top:525.2px;font-size:7.5px;font-weight:bold;color:#2b4f80;">c</div>
<div class="t" style="left:1178.00px;top:525px;font-size:10px;color:#111;font-weight:normal;font-family:'Liberation Sans';font-style:normal;transform:scaleX(1.000);transform:scaleX(0.922);-webkit-text-stroke:0.1px #111">HL_sys_phantom.c</div>
<div class="a" style="left:1152px;top:543.6px;width:9px;height:0;border-top:1px dotted #8a8a8a"></div>
<div class="a" style="left:1162px;top:537.6px;width:9px;height:12px;background:linear-gradient(135deg,#ffffff,#d6e3f2);border:1px solid #5f7da3;border-radius:1px"></div>
<div class="t" style="left:1163.5px;top:539.6px;font-size:7.5px;font-weight:bold;color:#2b4f80;">c</div>
<div class="t" style="left:1178.00px;top:540px;font-size:10px;color:#111;font-weight:normal;font-family:'Liberation Sans';font-style:normal;transform:scaleX(1.000);transform:scaleX(0.922);-webkit-text-stroke:0.1px #111">HL_sys_startup.c</div>
<div class="a" style="left:1152px;top:558.0px;width:9px;height:0;border-top:1px dotted #8a8a8a"></div>
<div class="a" style="left:1162px;top:552.0px;width:9px;height:12px;background:linear-gradient(135deg,#ffffff,#d6e3f2);border:1px solid #5f7da3;border-radius:1px"></div>
<div class="t" style="left:1163.5px;top:554.0px;font-size:7.5px;font-weight:bold;color:#2b4f80;">c</div>
<div class="t" style="left:1178.00px;top:554px;font-size:10px;color:#111;font-weight:normal;font-family:'Liberation Sans';font-style:normal;transform:scaleX(1.000);transform:scaleX(0.922);-webkit-text-stroke:0.1px #111">HL_sys_vim.c</div>
<div class="a" style="left:1152px;top:572.4px;width:9px;height:0;border-top:1px dotted #8a8a8a"></div>
<div class="a" style="left:1162px;top:566.4px;width:9px;height:12px;background:linear-gradient(135deg,#ffffff,#d6e3f2);border:1px solid #5f7da3;border-radius:1px"></div>
<div class="t" style="left:1163.5px;top:568.4px;font-size:7.5px;font-weight:bold;color:#2b4f80;">c</div>
<div class="t" style="left:1178.00px;top:568px;font-size:10px;color:#111;font-weight:normal;font-family:'Liberation Sans';font-style:normal;transform:scaleX(1.000);transform:scaleX(0.922);-webkit-text-stroke:0.1px #111">HL_sys_main.c</div>
<div class="a" style="left:1152px;top:586.8px;width:9px;height:0;border-top:1px dotted #8a8a8a"></div>
<div class="a" style="left:1162px;top:580.8px;width:9px;height:12px;background:linear-gradient(135deg,#ffffff,#d6e3f2);border:1px solid #5f7da3;border-radius:1px"></div>
<div class="t" style="left:1163.5px;top:582.8px;font-size:7.5px;font-weight:bold;color:#2b4f80;">c</div>
<div class="t" style="left:1178.00px;top:583px;font-size:10px;color:#111;font-weight:normal;font-family:'Liberation Sans';font-style:normal;transform:scaleX(1.000);transform:scaleX(0.922);-webkit-text-stroke:0.1px #111">HL_notification.c</div>
<div class="a" style="left:1152px;top:601.2px;width:9px;height:0;border-top:1px dotted #8a8a8a"></div>
<div class="a" style="left:1162px;top:595.2px;width:9px;height:12px;background:linear-gradient(135deg,#ffffff,#d6e3f2);border:1px solid #5f7da3;border-radius:1px"></div>
<div class="t" style="left:1163.5px;top:597.2px;font-size:7.5px;font-weight:bold;color:#2b4f80;">&#x2261;</div>
<div class="t" style="left:1178.00px;top:597px;font-size:10px;color:#111;font-weight:normal;font-family:'Liberation Sans';font-style:normal;transform:scaleX(1.000);transform:scaleX(0.922);-webkit-text-stroke:0.1px #111">HL_sys_link.cmd</div>
<div class="a" style="left:1152px;top:615.6px;width:9px;height:0;border-top:1px dotted #8a8a8a"></div>
<div class="a" style="left:1162px;top:609.6px;width:9px;height:12px;background:linear-gradient(135deg,#ffffff,#d6e3f2);border:1px solid #5f7da3;border-radius:1px"></div>
<div class="t" style="left:1163.5px;top:611.6px;font-size:7.5px;font-weight:bold;color:#2b4f80;">h</div>
<div class="t" style="left:1178.00px;top:612px;font-size:10px;color:#111;font-weight:normal;font-family:'Liberation Sans';font-style:normal;transform:scaleX(1.000);transform:scaleX(0.922);-webkit-text-stroke:0.1px #111">HL_reg_epc.h</div>
<div class="a" style="left:1152px;top:630.1px;width:9px;height:0;border-top:1px dotted #8a8a8a"></div>
<div class="a" style="left:1162px;top:624.1px;width:9px;height:12px;background:linear-gradient(135deg,#ffffff,#d6e3f2);border:1px solid #5f7da3;border-radius:1px"></div>
<div class="t" style="left:1163.5px;top:626.1px;font-size:7.5px;font-weight:bold;color:#2b4f80;">h</div>
<div class="t" style="left:1178.00px;top:626px;font-size:10px;color:#111;font-weight:normal;font-family:'Liberation Sans';font-style:normal;transform:scaleX(1.000);transform:scaleX(0.922);-webkit-text-stroke:0.1px #111">HL_reg_nmpu.h</div>
<div class="a" style="left:1266px;top:75px;width:14px;height:563px;background:linear-gradient(90deg,#e9e9ea,#f3f3f4 50%,#e6e6e8)"></div>
<div class="a" style="left:1270px;top:79px;width:0;height:0;border-left:3px solid transparent;border-right:3px solid transparent;border-bottom:3.5px solid #2a2a2a"></div>
<div class="a" style="left:1267px;top:89px;width:12px;height:152px;background:linear-gradient(90deg,#f4f4f5,#e2e2e4 50%,#d2d2d5);border:1px solid #9c9ca0;border-radius:2px"></div>
<div class="a" style="left:1270px;top:162px;width:6px;height:5px;border-top:1px solid #777;border-bottom:1px solid #777"></div><div class="a" style="left:1270px;top:164px;width:6px;height:1px;background:#777"></div>
<div class="a" style="left:1270px;top:628px;width:0;height:0;border-left:3px solid transparent;border-right:3px solid transparent;border-top:3.5px solid #2a2a2a"></div>
<div class="a" style="left:1112px;top:638px;width:168px;height:13px;background:linear-gradient(180deg,#e6e6e7,#f0f0f1 50%,#e4e4e6)"></div>
<div class="a" style="left:1116px;top:641.5px;width:0;height:0;border-top:3px solid transparent;border-bottom:3px solid transparent;border-right:3.5px solid #2a2a2a"></div>
<div class="a" style="left:1126px;top:639px;width:120px;height:11px;background:linear-gradient(180deg,#f4f4f5,#dedee0 50%,#cfcfd2);border:1px solid #a0a0a4;border-radius:2px"></div>
<div class="a" style="left:1183px;top:642px;width:5px;height:5px;border-left:1px solid #777;border-right:1px solid #777"></div><div class="a" style="left:1185px;top:642px;width:1px;height:5px;background:#777"></div>
<div class="a" style="left:1258px;top:641.5px;width:0;height:0;border-top:3px solid transparent;border-bottom:3px solid transparent;border-left:3.5px solid #2a2a2a"></div>
<div class="a" style="left:1112px;top:651px;width:168px;height:19px;background:linear-gradient(180deg,#cfe2fa,#b9d3f3)"></div>
<div class="a" style="left:1117px;top:651px;width:73px;height:18px;background:linear-gradient(180deg,#f7fbff,#e4eefb);border:1px solid #b5c8e0;border-top:none"></div>
<div class="t" style="left:1121.80px;top:656px;font-size:10.2px;color:#2a4166;font-weight:normal;font-family:'Liberation Sans';font-style:normal;transform:scaleX(0.878);">Device Explorer</div>
<div class="t" style="left:1198.50px;top:656px;font-size:10.2px;color:#2a4166;font-weight:normal;font-family:'Liberation Sans';font-style:normal;transform:scaleX(0.886);">File Explorer</div>
<div class="a" style="left:0;top:669px;width:1280px;height:2px;background:#8a9aae"></div>
<div class="a" style="left:0;top:671px;width:1113px;height:17px;background:linear-gradient(180deg,#dcebfc,#cde1f9 50%,#c1d9f7)"></div>
<div class="a" style="left:1113px;top:671px;width:167px;height:17px;background:linear-gradient(180deg,#c5d9f3,#a9c4ea 50%,#8fb0e0)"></div>
<div class="t" style="left:2.80px;top:676px;font-size:10.2px;color:#1e3354;font-weight:normal;font-family:'Liberation Sans';font-style:normal;transform:scaleX(0.869);">For Help, press F1</div>
<div class="t" style="left:1203.00px;top:675px;font-size:9.5px;color:#8aa2c4;font-weight:normal;font-family:'Liberation Sans';font-style:normal;transform:scaleX(0.826);">Read</div>
<div class="t" style="left:1229.00px;top:675px;font-size:9.5px;color:#8aa2c4;font-weight:normal;font-family:'Liberation Sans';font-style:normal;transform:scaleX(0.900);">CAP</div>
<div class="t" style="left:1254.00px;top:675px;font-size:9.5px;color:#8aa2c4;font-weight:normal;font-family:'Liberation Sans';font-style:normal;transform:scaleX(1.000);">OVR</div>
<div class="a" style="left:0;top:688px;width:1280px;height:32px;background:linear-gradient(180deg,#1d242d,#10161e 40%,#0d1219);"></div>
<div class="a" style="left:0;top:688px;width:1280px;height:1.5px;background:#59616b"></div>
<div class="a" style="left:755px;top:690px;width:60px;height:30px;background:radial-gradient(ellipse at 50% 60%,rgba(120,110,200,.35),transparent 70%)"></div>
<div class="a" style="left:810px;top:689px;width:100px;height:31px;background:radial-gradient(ellipse at 50% 40%,rgba(130,150,140,.22),transparent 70%)"></div>
<div class="a" style="left:960px;top:689px;width:40px;height:31px;background:radial-gradient(ellipse at 50% 40%,rgba(130,150,140,.15),transparent 70%)"></div>
<div class="a" style="left:1160px;top:690px;width:60px;height:30px;background:radial-gradient(ellipse at 50% 60%,rgba(120,110,190,.2),transparent 70%)"></div>
<div class="a" style="left:544px;top:689px;width:47px;height:31px;background:linear-gradient(180deg,rgba(255,255,255,0.55),rgba(255,255,255,0.30250000000000005) 50%,rgba(255,255,255,0.1925));border:1px solid rgba(255,255,255,0.7);border-radius:3px"></div>
<div class="a" style="left:643px;top:689px;width:46px;height:31px;background:linear-gradient(180deg,rgba(255,255,255,0.22),rgba(255,255,255,0.12100000000000001) 50%,rgba(255,255,255,0.077));border:1px solid rgba(255,255,255,0.42000000000000004);border-radius:3px"></div>
<div class="a" style="left:694px;top:689px;width:45px;height:31px;background:linear-gradient(180deg,rgba(255,255,255,0.22),rgba(255,255,255,0.12100000000000001) 50%,rgba(255,255,255,0.077));border:1px solid rgba(255,255,255,0.42000000000000004);border-radius:3px"></div>
<svg class="a" style="left:0;top:0" width="1280" height="720" viewBox="0 0 1280 720"><defs><radialGradient id="orb" cx="50%" cy="40%" r="60%"><stop offset="0" stop-color="#b9e6ff"/><stop offset=".45" stop-color="#3f9be0"/><stop offset=".8" stop-color="#1a5aa8"/><stop offset="1" stop-color="#0b2f66"/></radialGradient><linearGradient id="cube" x1="0" y1="0" x2="1" y2="1"><stop offset="0" stop-color="#f6f6f6"/><stop offset="1" stop-color="#9a9a9a"/></linearGradient></defs><circle cx="21.9" cy="703.8" r="14" fill="url(#orb)" stroke="#5aa9e8" stroke-width=".8"/><path d="M14.5,697.5q3.5,-1.5 7,0v6q-3.5,-1.5 -7,0z" fill="#f0532a"/><path d="M22.5,697.7q3.5,1.3 7,-.2v6q-3.5,1.5 -7,.2z" fill="#8cc63f"/><path d="M14.5,704.5q3.5,-1.5 7,0v6q-3.5,-1.5 -7,0z" fill="#2ea3e8"/><path d="M22.5,704.7q3.5,1.3 7,-.2v6q-3.5,1.5 -7,.2z" fill="#fbc02d"/><path d="M58.5,694.5h9l2,2h14v19h-25z" fill="#f4e6a8" stroke="#c9a94a" stroke-width=".8"/><rect x="61" y="699" width="20" height="7" fill="#fff7d2"/><path d="M58.5,706h25v10h-25z" fill="#8cc4e6"/><rect x="60" y="709" width="21" height="3" fill="#d7ecf8"/><circle cx="121" cy="703.5" r="11" fill="#c52a2a"/><circle cx="121" cy="703.5" r="11" fill="none" stroke="#8a8a8a" stroke-width="1" opacity=".6"/><path d="M114,698h14v8h-14z" fill="#fff"/><rect x="116.5" y="700" width="9" height="4" fill="#c52a2a"/><circle cx="126" cy="709" r="5" fill="#6aa7d8"/><path d="M123,707l3,-1l3,3l-2,3z" fill="#7cbf50"/><circle cx="170.3" cy="703.5" r="11.5" fill="#1d2f8a" stroke="#d2b24a" stroke-width="1.3"/><path d="M170.3,692.5l2.6,8.5h8.5l-6.9,5l2.7,8.5l-6.9,-5.3l-6.9,5.3l2.7,-8.5l-6.9,-5h8.5z" fill="#f3c53a" opacity=".9"/><rect x="208" y="697" width="25" height="18" rx="1.5" fill="#1b1b14" stroke="#8b8b7a" stroke-width=".8"/><path d="M208,692.5h25v4h-25z" fill="#1a1a1a"/><path d="M210,692.5l3,4M216,692.5l3,4M222,692.5l3,4M228,692.5l3,4" stroke="#eee" stroke-width="2"/><text x="211" y="712" font-family="Liberation Sans" font-weight="bold" font-size="13" fill="#d8e89a">um</text><path d="M257,692.5l22,2v15l-22,-1z" fill="#c9ced6" stroke="#e9edf2" stroke-width=".8"/><path d="M262,709l10,4" stroke="#888" stroke-width="1.2"/><text x="259" y="700.5" font-family="Liberation Sans" font-weight="bold" font-size="5.5" fill="#fff">eyeTV</text><path d="M329,696a11,11 0 1 0 2,14l-5,-3a5.5,5.5 0 1 1 -1,-7z" fill="#d53a2e"/><path d="M307,713l9,-8l4,4l-8,7z" fill="#f0c39a"/><path d="M316,705l6,-6l3,3l-6,6z" fill="#3a7ad0"/><path d="M368,692l10,4.5v12l-10,5l-10,-5v-12z" fill="#a9c9ef"/><path d="M368,692l10,4.5l-10,4.5l-10,-4.5z" fill="#e6f1fc"/><path d="M368,701v12.5l10,-5v-12z" fill="#7aa6dc"/><rect x="405.5" y="692.5" width="25" height="23" rx="3" fill="#d9d9d9" stroke="#f2f2f2" stroke-width=".8"/><circle cx="417.8" cy="704" r="6.5" fill="#222"/><circle cx="417.8" cy="704" r="4" fill="#3fb6c6"/><circle cx="417.8" cy="704" r="2" fill="#1d3c6a"/><rect x="455.5" y="692.5" width="23" height="23" fill="#2d72c8"/><rect x="455.5" y="692.5" width="23" height="7" fill="#1a1a1a"/><text x="457" y="698.5" font-family="Liberation Sans" font-size="5.5" fill="#e8a13a">kindle</text><path d="M462,715l8,-12l3,2l-4,10z" fill="#0f2f66"/><rect x="504" y="693.5" width="24" height="19" fill="#0a0a0a" stroke="#d0d4da" stroke-width="1.5"/><text x="506" y="701" font-family="Liberation Mono" font-size="5.5" fill="#ddd">C:\_</text><rect x="516" y="700" width="9" height="1" fill="#ddd"/><rect x="554" y="691.5" width="26.5" height="25" fill="#e2140f"/><rect x="554" y="691.5" width="26.5" height="3" fill="#1a0a0a"/><rect x="554" y="713.5" width="26.5" height="3" fill="#1a0a0a"/><text x="555.5" y="707.5" font-family="Liberation Sans" font-weight="bold" font-style="italic" font-size="10" fill="#fff">HCG</text><path d="M616.25,692l11,5v12l-11,6l-11,-6v-12z" fill="url(#cube)" stroke="#ddd" stroke-width=".6"/><path d="M611.25,697l5,2.5l5,-2.5l-5,-2.5z" fill="#333"/><path d="M608.25,703l4,2v4l-4,-2z" fill="#333"/><path d="M624.25,703l-4,2v4l4,-2z" fill="#333"/><path d="M614.75,706h3v5h-3z" fill="#555"/><path d="M665.6,692l11,5v12l-11,6l-11,-6v-12z" fill="url(#cube)" stroke="#ddd" stroke-width=".6"/><path d="M660.6,697l5,2.5l5,-2.5l-5,-2.5z" fill="#333"/><path d="M657.6,703l4,2v4l-4,-2z" fill="#333"/><path d="M673.6,703l-4,2v4l4,-2z" fill="#333"/><path d="M664.1,706h3v5h-3z" fill="#555"/><circle cx="715.6" cy="703.5" r="11.5" fill="#e8453c"/><path d="M715.6,703.5L725.6,697.7A11.5,11.5 0 0 1 719,714.5z" fill="#f9bc15"/><path d="M715.6,703.5L719,714.5A11.5,11.5 0 0 1 705.6,697.7z" fill="#34a853"/><circle cx="715.6" cy="703.5" r="5" fill="#fff"/><circle cx="715.6" cy="703.5" r="3.8" fill="#3f7fe8"/><path d="M1096,698l6,3v6l-6,3l-6,-3v-6z" fill="url(#cube)"/><path d="M1093,701l3,1.5l3,-1.5l-3,-1.5z" fill="#333"/><path d="M1110,697v13" stroke="#ddd" stroke-width="1.2"/><path d="M1111,697h8v6h-8z" fill="#eee"/><rect x="1115" y="703" width="7" height="7" fill="#d4302a"/><path d="M1116.5,704.5l4,4m0,-4l-4,4" stroke="#fff" stroke-width="1"/><rect x="1129" y="698" width="6" height="5" fill="none" stroke="#e0e0e0" stroke-width="1"/><rect x="1134" y="702" width="8" height="6" fill="#151515" stroke="#e0e0e0" stroke-width="1"/><path d="M1131,703v6h3" stroke="#ddd" stroke-width="1" fill="none"/><rect x="1148" y="696" width="4" height="13" fill="#9a9a9a"/><circle cx="1155" cy="707" r="4" fill="#2eaa3c"/><path d="M1153,707l1.5,1.5l3,-3" stroke="#fff" stroke-width="1" fill="none"/><rect x="1166" y="698" width="12" height="12" rx="1" fill="#e3a04a" stroke="#f2d08a" stroke-width=".8"/><rect x="1172" y="703" width="6" height="7" fill="#d4302a"/><path d="M1188,701h3l4,-4v14l-4,-4h-3z" fill="#e6e6e6"/><path d="M1197,700q2,4 0,8" stroke="#bbb" stroke-width="1" fill="none"/></svg>
<div class="t" style="left:1216.00px;top:695px;font-size:10.2px;color:#f4f4f4;font-weight:normal;font-family:'Liberation Sans';font-style:normal;transform:scaleX(0.902);">12:59 PM</div>
<div class="t" style="left:1212.60px;top:707px;font-size:10.2px;color:#f4f4f4;font-weight:normal;font-family:'Liberation Sans';font-style:normal;transform:scaleX(0.920);">08/03/2016</div>
<div class="a" style="left:1269px;top:689px;width:11px;height:31px;background:linear-gradient(90deg,rgba(255,255,255,.15),rgba(255,255,255,.05));border:1px solid rgba(255,255,255,.35);border-right:none"></div>
</body></html>
